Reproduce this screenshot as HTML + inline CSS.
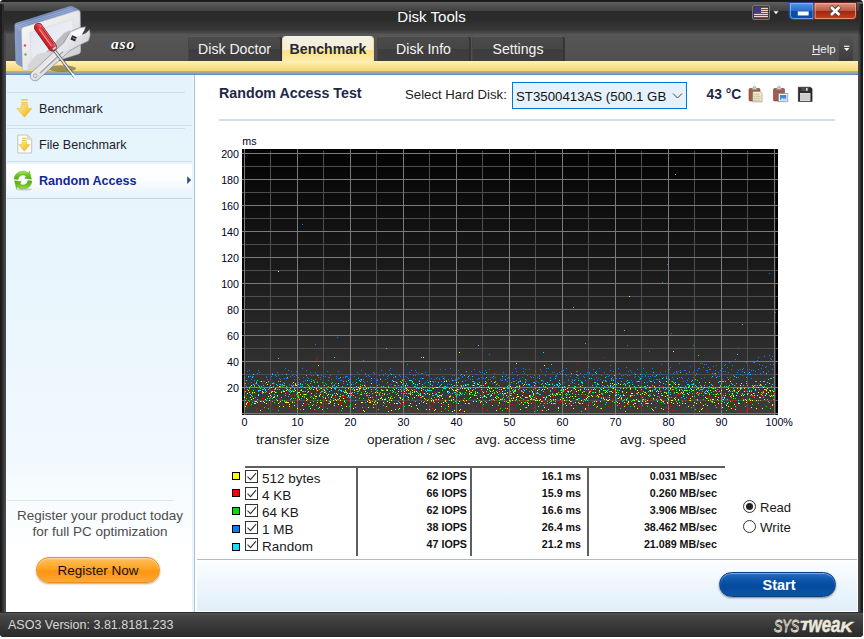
<!DOCTYPE html>
<html lang="en">
<head>
<meta charset="utf-8">
<title>Disk Tools</title>
<style>
html,body{margin:0;padding:0;background:#fff;}
body{width:864px;height:639px;position:relative;overflow:hidden;font-family:"Liberation Sans",sans-serif;color:#1a1a1a;}
.abs,.win div{position:absolute;box-sizing:border-box;}
.win{position:absolute;left:0;top:0;width:863px;height:637px;background:#2a2a2a;border-radius:4px 4px 4px 4px;overflow:hidden;}
.titlebar{left:0;top:0;width:863px;height:34px;background:linear-gradient(#181818 0,#202020 2px,#5e5e5e 2.3px,#505050 6px,#404040 11px,#2a2a2a 11.3px,#2c2c2c 20px,#383838 30px,#464646 32.5px,#525252 34px);}
.title{left:0;top:7px;width:863px;text-align:center;color:#fff;font-size:15.1px;line-height:20px;white-space:nowrap;}
.tabbar{left:6px;top:34px;width:852px;height:27px;background:linear-gradient(#565656,#4f4f4f);}
.frameL{left:0;top:34px;width:6px;height:603px;background:linear-gradient(90deg,#1a1a1a 0,#1e1e1e 1.5px,#303030 2px,#343434 3.5px,#444 4px,#4a4a4a 6px);}
.frameR{left:858px;top:34px;width:5px;height:603px;background:linear-gradient(90deg,#4a4a4a 0,#444 1.5px,#343434 2px,#303030 3px,#1e1e1e 3.5px,#1a1a1a 5px);}
.tab{top:36px;height:25px;border-radius:4px 4px 0 0;background:linear-gradient(#4b4b4b,#464646 48%,#3d3d3d 52%,#3f3f3f);border-top:1px solid #5c5c5c;border-left:1px solid #454545;border-right:2px solid #353535;color:#f4f4f4;font-size:14.1px;line-height:25px;text-align:center;white-space:nowrap;}
.tab.act{background:linear-gradient(#f3f1e4 0,#f5eed2 50%,#fbe18a 54%,#fdedb0 100%);border:1px solid #f3dc8c;border-bottom:none;border-top-color:#f4f2ea;color:#26263a;font-weight:bold;height:26px;line-height:24px;}
.yband{left:6px;top:61px;width:852px;height:10px;background:linear-gradient(#fdf1b8,#fbe590 50%,#f6d66c);}
.gband{left:6px;top:71px;width:852px;height:3px;background:linear-gradient(#b0b0b0,#989898);}
.bline{left:6px;top:74px;width:852px;height:1px;background:#5f8fc4;}
.side{left:6px;top:75px;width:188px;height:537px;background:linear-gradient(#e5f3fc 0,#e8f5fc 200px,#f1f9fe 380px,#fff 480px);}
.sideborder{left:192px;top:75px;width:3px;height:537px;background:linear-gradient(90deg,#e9f4fc 0,#e9f4fc 2px,#a9c1d9 2px,#a9c1d9 3px);}
.main{left:195px;top:75px;width:663px;height:537px;background:#fff;}
.sline{left:7px;height:1px;background:#cfdfee;}
.item{left:7px;width:185px;height:34px;font-size:12.6px;line-height:34px;color:#1c1c28;white-space:nowrap;}
.item span{position:absolute;left:32px;top:0;}
.item.sel{background:linear-gradient(#ffffff,#fbfdff 50%,#e6f2fb);color:#10289a;font-weight:bold;}
.status{left:0;top:612px;width:863px;height:25px;background:linear-gradient(#1c1c1c 0,#505050 1.5px,#464646 4px,#383838 14px,#2a2a2a 25px);}
.ver{left:8px;top:617.7px;color:#d8d8d8;font-size:12.5px;line-height:15px;white-space:nowrap;}
svg{position:absolute;left:0;top:0;overflow:visible;}
.lbl{font-size:13.5px;color:#1a1a1a;white-space:nowrap;line-height:16px;}
.val{font-size:10.7px;font-weight:bold;color:#111;white-space:nowrap;text-align:right;line-height:14px;}
.cb{left:245px;width:13px;height:13px;border:1px solid #333;background:#fff;}
.sq{left:232px;width:8px;height:8px;border:1px solid #000;}
</style>
</head>
<body>
<div class="win">
  <div class="titlebar"></div>
  <div class="title">Disk Tools</div>
  <div class="frameL"></div><div class="frameR"></div>
  <div class="abs" style="left:0;top:4px;width:4px;height:30px;background:linear-gradient(90deg,#1a1a1a 0,#1c1c1c 1.5px,#2c2c2c 2px,#2c2c2c 4px);"></div>
  <div class="abs" style="left:859px;top:4px;width:4px;height:30px;background:linear-gradient(90deg,#2c2c2c 0,#2c2c2c 2px,#1c1c1c 2.5px,#1a1a1a 4px);"></div>
  <div class="tabbar"></div>
  <div class="tab" style="left:188px;width:94px;">Disk Doctor</div>
  <div class="tab act" style="left:282px;width:92px;">Benchmark</div>
  <div class="tab" style="left:377px;width:94px;">Disk Info</div>
  <div class="tab" style="left:472px;width:93px;">Settings</div>
  <div class="yband"></div><div class="gband"></div><div class="bline"></div>
  <div class="abs" style="left:111px;top:35px;color:#fff;font-family:'Liberation Serif',serif;font-style:italic;font-weight:bold;font-size:15.500px;line-height:18px;letter-spacing:0.8px;text-shadow:1px 1px 2px #000;">aso</div>
  <div class="abs" style="left:812px;top:41px;color:#f0f0f0;font-size:11.5px;line-height:16px;"><u>H</u>elp</div>
  <div class="abs" style="left:839px;top:35px;width:14px;height:26px;background:linear-gradient(#555,#3c3c3c);border-radius:3px 3px 0 0;"></div>

  <!-- window buttons -->
  <div class="abs" style="left:752px;top:5px;width:18px;height:15px;border:1px solid #777;border-radius:2px;background:#3a3a3a;"></div>
  <svg width="864" height="639" viewBox="0 0 864 639">
    <defs>
      <linearGradient id="minG" x1="0" y1="0" x2="0" y2="1"><stop offset="0" stop-color="#5a9ae8"/><stop offset="0.48" stop-color="#2a6ccc"/><stop offset="0.5" stop-color="#0a48a4"/><stop offset="1" stop-color="#0c50ac"/></linearGradient>
      <linearGradient id="clsG" x1="0" y1="0" x2="0" y2="1"><stop offset="0" stop-color="#dc9c8c"/><stop offset="0.48" stop-color="#bc5640"/><stop offset="0.5" stop-color="#a42410"/><stop offset="1" stop-color="#c44420"/></linearGradient>
    </defs>
    <!-- flag -->
    <rect x="754" y="7" width="14" height="11" fill="#fff"/>
    <g fill="#d8202c"><rect x="754" y="7" width="14" height="1.2"/><rect x="754" y="9" width="14" height="1.2"/><rect x="754" y="11" width="14" height="1.2"/><rect x="754" y="13" width="14" height="1.2"/><rect x="754" y="15" width="14" height="1.2"/><rect x="754" y="17" width="14" height="1"/></g>
    <rect x="754" y="7" width="7" height="6" fill="#3c3c8c"/>
    <path d="M773.5 11.3h5l-2.5 3z" fill="#fff"/>
    <!-- minimize -->
    <path d="M789 2.5h25v17h-21a4 4 0 0 1 -4 -4z" fill="url(#minG)" stroke="#1c4c9c" stroke-width="1"/>
    <path d="M790.5 3.5h22.5v15h-19.5a3 3 0 0 1 -3 -3z" fill="none" stroke="#8cb8f4" stroke-width="1" opacity=".8"/>
    <rect x="798" y="11.7" width="10.5" height="3.5" fill="#fff" stroke="#d0d8e8" stroke-width=".5"/>
    <!-- close -->
    <path d="M814 2.5h42.5v13a4 4 0 0 1 -4 4h-38.5z" fill="url(#clsG)" stroke="#6c2414" stroke-width="1"/>
    <path d="M815.2 3.5h40.3v12a3 3 0 0 1 -3 3h-37.3z" fill="none" stroke="#f0b8a8" stroke-width="1" opacity=".7"/>
    <path d="M830.5 6.5l9 8.5M839.5 6.5l-9 8.5" stroke="#4a4a4a" stroke-width="4.2" fill="none"/>
    <path d="M831 7l8.500 8M839.500 7l-8.500 8" stroke="#5c3c34" stroke-width="4" fill="none"/><path d="M831 7l8.500 8M839.500 7l-8.500 8" stroke="#fff" stroke-width="2.600" fill="none"/>
    <!-- help dropdown -->
    <rect x="844" y="45.700" width="5.400" height="1.100" fill="#fff"/>
    <path d="M844 48h5.400l-2.700 3z" fill="#fff"/>
  </svg>
  <div class="side"></div>
  <div class="sideborder"></div>
  <div class="main"></div>


  <!-- sidebar items -->
  <div class="sline" style="top:92px;width:178px;"></div>
  <div class="item" style="top:92px;"><span>Benchmark</span></div>
  <div class="sline" style="top:125px;width:185px;"></div>
  <div class="sline" style="top:128px;width:178px;"></div>
  <div class="item" style="top:128px;"><span>File Benchmark</span></div>
  <div class="sline" style="top:161px;width:185px;"></div>
  <div class="item sel" style="top:164px;"><span>Random Access</span></div>
  <div class="sline" style="top:198px;width:185px;background:#c5d8ea;"></div>
  <div class="sline" style="top:500px;width:166px;background:#dbe7f2;"></div>
  <div class="abs" style="left:6px;top:508px;width:188px;text-align:center;font-size:13.5px;line-height:16.300px;color:#4c4c4c;white-space:nowrap;">Register your product today<br>for full PC optimization</div>
  <div class="abs" style="left:36px;top:557px;width:124px;height:26px;border-radius:13px;border:1px solid #e8901c;background:linear-gradient(#ffc060,#ffa01c 50%,#ff9410 55%,#ffa838);box-shadow:0 1px 2px rgba(120,80,0,.5),inset 0 1px 1px #ffe0a0;text-align:center;font-size:13.5px;line-height:25.500px;color:#111;">Register Now</div>

  <!-- header -->
  <div class="abs" style="left:219px;top:84px;font-size:14.250px;font-weight:bold;color:#1e2846;line-height:18px;white-space:nowrap;">Random Access Test</div>
  <div class="abs" style="left:405px;top:86.500px;font-size:13.2px;color:#222;line-height:16px;white-space:nowrap;">Select Hard Disk:</div>
  <div class="abs" style="left:512px;top:82px;width:175px;height:27px;border:1px solid #0078d7;background:#e5f1fb;font-size:13.25px;line-height:27px;padding-left:3px;white-space:nowrap;overflow:hidden;color:#111;">ST3500413AS (500.1 GB</div>
  <div class="abs" style="left:706.500px;top:86.500px;font-size:13.8px;font-weight:bold;color:#1e2846;line-height:16px;white-space:nowrap;">43 °C</div>
  <div class="abs" style="left:219px;top:119px;width:616px;height:2px;background:#d3deeb;"></div>

  <!-- icons -->
  <svg width="864" height="639" viewBox="0 0 864 639">
    <defs>
      <linearGradient id="yel" x1="0" y1="0" x2="1" y2="1"><stop offset="0" stop-color="#fff0a0"/><stop offset="0.5" stop-color="#f8d048"/><stop offset="1" stop-color="#e8b020"/></linearGradient>
      <linearGradient id="grn" x1="0" y1="0" x2="0" y2="1"><stop offset="0" stop-color="#b4e868"/><stop offset="0.5" stop-color="#6cc41c"/><stop offset="1" stop-color="#58a810"/></linearGradient>
      <linearGradient id="grn2" x1="0" y1="1" x2="0" y2="0"><stop offset="0" stop-color="#a8e058"/><stop offset="0.5" stop-color="#68c018"/><stop offset="1" stop-color="#58a810"/></linearGradient>
    </defs>
    <!-- benchmark arrow -->
    <g id="arrY">
      <rect x="21.3" y="99" width="6.4" height="1.6" fill="#f2c84a"/>
      <rect x="21.3" y="101.9" width="6.4" height="1.7" fill="#f2c84a"/>
      <path d="M21.3 104.6h6.4v3.8h4.2l-7.4 8.8l-7.6 -8.8h4.4z" fill="url(#yel)" stroke="#e4b838" stroke-width=".6"/>
    </g>
    <!-- file benchmark -->
    <path d="M17.8 135h9.6l4.3 4.3v13.7h-13.9z" fill="#fdfdfd" stroke="#c4c4c4" stroke-width="1"/>
    <path d="M27.4 135v4.3h4.3z" fill="#e4e4e4" stroke="#c4c4c4" stroke-width=".6"/>
    <rect x="22" y="137.6" width="4.6" height="1.2" fill="#f2c84a"/>
    <rect x="22" y="139.8" width="4.6" height="1.2" fill="#f2c84a"/>
    <path d="M22 141.9h4.6v2.6h3.2l-5.5 6.7l-5.6 -6.7h3.3z" fill="url(#yel)" stroke="#e4b838" stroke-width=".5"/>
    <!-- random access: green arrows -->
    <ellipse cx="24" cy="189.3" rx="8" ry="1.3" fill="#9aa4b0" opacity=".5"/>
    <path d="M14.05 179.06A9.0 9.0 0 0 1 28.79 173.11L29.47 171.10L31.47 179.26L24.73 178.33L26.21 176.17A5.0 5.0 0 0 0 18.03 179.48Z" fill="url(#grn)" stroke="#4c9a10" stroke-width=".4"/>
    <path d="M31.95 180.94A9.0 9.0 0 0 1 17.21 186.89L16.53 188.90L14.53 180.74L21.27 181.67L19.79 183.83A5.0 5.0 0 0 0 27.97 180.52Z" fill="url(#grn2)" stroke="#4c9a10" stroke-width=".4"/>
    <!-- small arrow -->
    <path d="M187.200 176.200l3.900 3.900l-3.900 3.900z" fill="#2c4a8c"/>
    <!-- select chevron -->
    <path d="M673 93.500l4.500 4.500l4.500 -4.500" fill="none" stroke="#444" stroke-width="1"/>
    <!-- clipboard 1 -->
    <g>
      <rect x="749" y="88.5" width="11" height="12.5" rx="1" fill="#a05c4c" stroke="#7c4034" stroke-width=".6"/>
      <path d="M752 89.5l1.2 -2.4h2.6l1.2 2.4z" fill="#d8d8d8" stroke="#8c8c8c" stroke-width=".5"/>
      <circle cx="754.5" cy="86.9" r="1" fill="#e8e8e8" stroke="#8c8c8c" stroke-width=".4"/>
      <path d="M752.8 91.5h7.2l2 2v8.4h-9.2z" fill="#f4efd8" stroke="#8c8468" stroke-width=".6"/>
      <path d="M754 94.2h5.5M754 96.2h6.5M754 98.2h6.5M754 100.2h6.5" stroke="#b0a884" stroke-width=".7"/>
    </g>
    <!-- clipboard 2 -->
    <g>
      <rect x="773.5" y="88.5" width="11" height="12.5" rx="1" fill="#a05c4c" stroke="#7c4034" stroke-width=".6"/>
      <path d="M776.5 89.5l1.2 -2.4h2.6l1.2 2.4z" fill="#d8d8d8" stroke="#8c8c8c" stroke-width=".5"/>
      <circle cx="779" cy="86.9" r="1" fill="#e8e8e8" stroke="#8c8c8c" stroke-width=".4"/>
      <rect x="778.5" y="93.5" width="9.3" height="8.3" fill="#f4f4f4" stroke="#8c8c8c" stroke-width=".7"/>
      <rect x="780" y="95" width="6.3" height="5.3" fill="#3c8cd8"/>
      <path d="M780 100.3l2.2 -2.6l1.6 1.4l1.2 -1l1.3 2.2z" fill="#c8e4f8"/>
    </g>
    <!-- floppy -->
    <g>
      <path d="M798.3 87.2h12.2l1.6 1.6v12.7h-13.8z" fill="#2c2c2c" stroke="#141414" stroke-width=".5"/>
      <rect x="801" y="87.6" width="7.6" height="3.6" fill="#4c4c4c"/>
      <rect x="806" y="88" width="1.6" height="2.8" fill="#d8d8d8"/>
      <rect x="800" y="93" width="10.4" height="8" fill="#dcdcdc"/>
      <path d="M800 95h10.4M800 97h10.4M800 99h10.4" stroke="#a8a8a8" stroke-width=".6"/>
    </g>
  </svg>


  <!-- logo -->
  <svg width="864" height="639" viewBox="0 0 864 639">
    <defs>
      <linearGradient id="hdF" x1="0" y1="0" x2="1" y2="1"><stop offset="0" stop-color="#fafafa"/><stop offset="0.6" stop-color="#e4e4e6"/><stop offset="1" stop-color="#c4c4c8"/></linearGradient>
      <linearGradient id="hdS" x1="0" y1="0" x2="1" y2="0"><stop offset="0" stop-color="#8ca0c8"/><stop offset=".25" stop-color="#7088b8"/><stop offset="1" stop-color="#8098c4"/></linearGradient>
      <linearGradient id="hdI" x1="0" y1="0" x2="1" y2="1"><stop offset="0" stop-color="#dfe3ee"/><stop offset="1" stop-color="#f4f5f8"/></linearGradient>
      <linearGradient id="redH" x1="0" y1="1" x2="1" y2="0"><stop offset="0" stop-color="#8c0c10"/><stop offset="0.45" stop-color="#d8242c"/><stop offset="0.7" stop-color="#f0787c"/><stop offset="1" stop-color="#b81018"/></linearGradient>
      <linearGradient id="slv" x1="0" y1="0" x2="1" y2="1"><stop offset="0" stop-color="#ffffff"/><stop offset="0.5" stop-color="#e4e4e8"/><stop offset="1" stop-color="#a8a8ac"/></linearGradient>
    </defs>
    <ellipse cx="62" cy="68.5" rx="14" ry="3.2" fill="#000" opacity=".35"/>
    <!-- hdd side (striped blue) -->
    <path d="M14.5 25.5q0 -2 2 -2.8l53 -16.5q2 -.5 3.500 .3l6.500 3.500q1 .8 1 2v38.500q0 2 -2 2.700l-50.500 16q-2 .5 -3.500 -.5l-7.500 -4.500q-1.500 -1 -1.500 -3z" fill="url(#hdS)"/>
    <path d="M15.500 26l56 -17.500M16.500 27.500l56.500 -17.500M18 29l57 -17.800M19.500 30.300l57 -17.800" stroke="#c4d0e8" stroke-width=".6" fill="none" opacity=".7"/>
    <!-- hdd front -->
    <path d="M21.500 30q0 -2 2 -2.700l53 -16.500q3 -.8 3.500 2l.5 38.500q0 2 -2 2.700l-52 16.500q-3.500 1 -4 -2z" fill="url(#hdF)" stroke="#b4b8c4" stroke-width=".5"/>
    <path d="M30 32.500l43 -13.500v27l-42 14z" fill="url(#hdI)" stroke="#d0d4dc" stroke-width=".5"/>
    <circle cx="25" cy="45.500" r="1.200" fill="#e84c4c"/>
    <circle cx="25.500" cy="54.500" r="1.200" fill="#58c428"/>
    <!-- bracket/shadow areas -->
    <path d="M46 52l18 -19l6 -3l-2 10l-14 16z" fill="#a8a8ac" opacity=".7"/>
    <path d="M27 66l10 -12l40 -8l2 4l-50 19z" fill="#d4d4d8" opacity=".9"/>
    <!-- wrench -->
    <path d="M31.5 72.500L63.500 43L70.500 31.500L80 27.500L85.600 26.800L84.500 30.500L82.500 34L86 33L89.500 29.500Q91.500 35 88.500 41L79 45.500L70 50.500L38.800 79.200A4.700 4.700 0 1 1 31.500 72.500Z" fill="url(#slv)" stroke="#77777c" stroke-width=".6" stroke-linejoin="round"/>
    <path d="M71 33l9 -4l4.500 -.8l-1.500 3.500l-1.500 3l-8 4z" fill="#fff" opacity=".8"/>
    <path d="M40.500 72.500L62.500 52" stroke="#a4a4a8" stroke-width="1.600" fill="none" stroke-linecap="round"/>
    <path d="M39.500 71.500L61.500 51" stroke="#fff" stroke-width=".8" fill="none" stroke-linecap="round"/>
    <circle cx="35.200" cy="75.800" r="1.800" fill="#dfe7f0" stroke="#77777c" stroke-width=".5"/>
    <path d="M72.200 35.300l4.600 2l-1.700 4.300l-4.600 -2z" fill="#26262a"/>
    <path d="M72.400 37.700l3.800 1.600" stroke="#d0d0d4" stroke-width=".7"/>
    <path d="M84.800 30.200l-2.600 4.200l1.600 -.4l2.600 -3.600z" fill="#3c3c40"/>
    <!-- screwdriver shaft -->
    <path d="M54.500 50.500l19.500 25.500" stroke="#5c5c60" stroke-width="3" stroke-linecap="round"/>
    <path d="M54.500 50.500l19.500 25.500" stroke="#e4e4e8" stroke-width="1.600" stroke-linecap="round"/>
    <path d="M73 74.500l2.500 3" stroke="#fafafa" stroke-width="2.200" stroke-linecap="round"/>
    <!-- screwdriver handle -->
    <path d="M38.500 27.500l14 19.500" stroke="#7c0c10" stroke-width="9" stroke-linecap="round"/>
    <path d="M38.500 27.500l14 19.500" stroke="url(#redH)" stroke-width="7.800" stroke-linecap="round"/>
    <path d="M39.500 29.500l11.500 16" stroke="#f8a0a4" stroke-width="1.200" stroke-linecap="round" opacity=".9"/>
    <path d="M41.800 27.800l11.500 16" stroke="#8c0c14" stroke-width="1" stroke-linecap="round" opacity=".8"/>
    <path d="M52 48.500l3.500 -2.500l1.500 2l-3.500 2.500z" fill="#c8ccd0" stroke="#505054" stroke-width=".5"/>
  </svg>
  <!-- chart -->
  <svg width="864" height="639" viewBox="0 0 864 639" shape-rendering="crispEdges">
    <defs>
      <linearGradient id="pg" x1="0" y1="0" x2="0" y2="1"><stop offset="0" stop-color="#030303"/><stop offset="0.45" stop-color="#1a1a1a"/><stop offset="1" stop-color="#3c3c3c"/></linearGradient>
    </defs>
    <rect x="242" y="149" width="536" height="266" fill="url(#pg)"/>
    <rect x="242" y="149" width="2" height="266" fill="#000"/>
    <rect x="776" y="149" width="2" height="266" fill="#000"/>
    <g id="grid" fill="#7a7a7a"><rect x="747" y="151" width="1" height="264" fill="#4e4e4e"/><rect x="694" y="151" width="1" height="264" fill="#4e4e4e"/><rect x="641" y="151" width="1" height="264" fill="#4e4e4e"/><rect x="588" y="151" width="1" height="264" fill="#4e4e4e"/><rect x="535" y="151" width="1" height="264" fill="#4e4e4e"/><rect x="482" y="151" width="1" height="264" fill="#4e4e4e"/><rect x="429" y="151" width="1" height="264" fill="#4e4e4e"/><rect x="376" y="151" width="1" height="264" fill="#4e4e4e"/><rect x="323" y="151" width="1" height="264" fill="#4e4e4e"/><rect x="270" y="151" width="1" height="264" fill="#4e4e4e"/><rect x="242" y="413" width="536" height="1"/><rect x="242" y="400" width="536" height="1" fill="#4e4e4e"/><rect x="242" y="387" width="536" height="1"/><rect x="242" y="374" width="536" height="1" fill="#4e4e4e"/><rect x="242" y="361" width="536" height="1"/><rect x="242" y="348" width="536" height="1" fill="#4e4e4e"/><rect x="242" y="335" width="536" height="1"/><rect x="242" y="322" width="536" height="1" fill="#4e4e4e"/><rect x="242" y="309" width="536" height="1"/><rect x="242" y="296" width="536" height="1" fill="#4e4e4e"/><rect x="242" y="283" width="536" height="1"/><rect x="242" y="270" width="536" height="1" fill="#4e4e4e"/><rect x="242" y="257" width="536" height="1"/><rect x="242" y="244" width="536" height="1" fill="#4e4e4e"/><rect x="242" y="231" width="536" height="1"/><rect x="242" y="218" width="536" height="1" fill="#4e4e4e"/><rect x="242" y="205" width="536" height="1"/><rect x="242" y="192" width="536" height="1" fill="#4e4e4e"/><rect x="242" y="179" width="536" height="1"/><rect x="242" y="166" width="536" height="1" fill="#4e4e4e"/><rect x="242" y="153" width="536" height="1"/><rect x="244" y="149" width="1" height="266"/><rect x="297" y="149" width="1" height="266"/><rect x="350" y="149" width="1" height="266"/><rect x="403" y="149" width="1" height="266"/><rect x="456" y="149" width="1" height="266"/><rect x="509" y="149" width="1" height="266"/><rect x="562" y="149" width="1" height="266"/><rect x="615" y="149" width="1" height="266"/><rect x="668" y="149" width="1" height="266"/><rect x="721" y="149" width="1" height="266"/><rect x="774" y="149" width="1" height="266"/></g>
    <g id="dots"><path fill="#ff0000" d="M244 390h1v1h-1zM245 396h1v1h-1zM246 395h1v1h-1zM247 400h1v1h-1zM247 407h1v1h-1zM248 383h1v1h-1zM249 402h1v1h-1zM249 404h1v1h-1zM250 405h1v1h-1zM251 391h1v1h-1zM252 397h1v1h-1zM253 401h1v1h-1zM254 384h1v1h-1zM254 401h1v1h-1zM255 393h1v1h-1zM256 409h1v1h-1zM257 411h1v1h-1zM257 408h1v1h-1zM258 404h1v1h-1zM259 401h1v1h-1zM259 389h1v1h-1zM260 401h1v1h-1zM261 392h1v1h-1zM262 398h1v1h-1zM262 403h1v1h-1zM263 398h1v1h-1zM264 389h1v1h-1zM265 391h1v1h-1zM265 391h1v1h-1zM266 389h1v1h-1zM267 392h1v1h-1zM268 404h1v1h-1zM268 401h1v1h-1zM269 398h1v1h-1zM270 396h1v1h-1zM271 403h1v1h-1zM272 409h1v1h-1zM272 390h1v1h-1zM273 384h1v1h-1zM274 403h1v1h-1zM274 387h1v1h-1zM276 392h1v1h-1zM276 402h1v1h-1zM277 401h1v1h-1zM278 407h1v1h-1zM278 410h1v1h-1zM279 398h1v1h-1zM280 399h1v1h-1zM281 399h1v1h-1zM282 385h1v1h-1zM282 403h1v1h-1zM283 390h1v1h-1zM284 389h1v1h-1zM285 393h1v1h-1zM285 388h1v1h-1zM286 390h1v1h-1zM287 392h1v1h-1zM288 394h1v1h-1zM289 408h1v1h-1zM289 408h1v1h-1zM290 396h1v1h-1zM291 395h1v1h-1zM292 407h1v1h-1zM292 396h1v1h-1zM293 410h1v1h-1zM294 395h1v1h-1zM294 394h1v1h-1zM295 390h1v1h-1zM296 400h1v1h-1zM297 402h1v1h-1zM298 398h1v1h-1zM298 394h1v1h-1zM299 392h1v1h-1zM300 409h1v1h-1zM300 403h1v1h-1zM301 406h1v1h-1zM302 387h1v1h-1zM302 401h1v1h-1zM303 395h1v1h-1zM304 391h1v1h-1zM305 404h1v1h-1zM305 411h1v1h-1zM307 400h1v1h-1zM307 403h1v1h-1zM308 392h1v1h-1zM309 404h1v1h-1zM310 395h1v1h-1zM310 405h1v1h-1zM311 397h1v1h-1zM312 397h1v1h-1zM313 401h1v1h-1zM313 397h1v1h-1zM314 399h1v1h-1zM315 410h1v1h-1zM316 403h1v1h-1zM316 390h1v1h-1zM317 391h1v1h-1zM318 386h1v1h-1zM319 393h1v1h-1zM320 393h1v1h-1zM320 405h1v1h-1zM321 392h1v1h-1zM321 406h1v1h-1zM322 398h1v1h-1zM323 397h1v1h-1zM324 411h1v1h-1zM325 400h1v1h-1zM326 403h1v1h-1zM326 391h1v1h-1zM327 386h1v1h-1zM328 401h1v1h-1zM328 393h1v1h-1zM329 391h1v1h-1zM330 399h1v1h-1zM331 410h1v1h-1zM332 386h1v1h-1zM332 396h1v1h-1zM333 405h1v1h-1zM334 399h1v1h-1zM335 397h1v1h-1zM335 396h1v1h-1zM336 383h1v1h-1zM337 403h1v1h-1zM337 406h1v1h-1zM338 402h1v1h-1zM339 410h1v1h-1zM340 402h1v1h-1zM340 400h1v1h-1zM341 403h1v1h-1zM342 397h1v1h-1zM343 396h1v1h-1zM344 398h1v1h-1zM344 402h1v1h-1zM345 396h1v1h-1zM346 391h1v1h-1zM346 392h1v1h-1zM348 400h1v1h-1zM348 389h1v1h-1zM349 401h1v1h-1zM350 403h1v1h-1zM351 392h1v1h-1zM351 394h1v1h-1zM352 394h1v1h-1zM353 388h1v1h-1zM353 397h1v1h-1zM354 404h1v1h-1zM355 396h1v1h-1zM356 403h1v1h-1zM356 391h1v1h-1zM358 410h1v1h-1zM358 386h1v1h-1zM359 397h1v1h-1zM359 395h1v1h-1zM360 391h1v1h-1zM361 393h1v1h-1zM362 402h1v1h-1zM363 391h1v1h-1zM363 391h1v1h-1zM364 395h1v1h-1zM365 384h1v1h-1zM365 407h1v1h-1zM366 409h1v1h-1zM367 407h1v1h-1zM368 398h1v1h-1zM369 399h1v1h-1zM369 399h1v1h-1zM370 401h1v1h-1zM371 400h1v1h-1zM372 396h1v1h-1zM372 385h1v1h-1zM373 389h1v1h-1zM373 393h1v1h-1zM374 404h1v1h-1zM375 403h1v1h-1zM376 408h1v1h-1zM377 385h1v1h-1zM378 392h1v1h-1zM378 393h1v1h-1zM379 388h1v1h-1zM380 397h1v1h-1zM381 390h1v1h-1zM381 395h1v1h-1zM382 394h1v1h-1zM383 393h1v1h-1zM384 401h1v1h-1zM384 393h1v1h-1zM385 407h1v1h-1zM386 383h1v1h-1zM386 408h1v1h-1zM387 387h1v1h-1zM388 385h1v1h-1zM389 384h1v1h-1zM390 395h1v1h-1zM390 404h1v1h-1zM391 398h1v1h-1zM392 401h1v1h-1zM393 392h1v1h-1zM394 383h1v1h-1zM394 403h1v1h-1zM395 407h1v1h-1zM396 394h1v1h-1zM397 395h1v1h-1zM398 401h1v1h-1zM398 406h1v1h-1zM398 401h1v1h-1zM400 403h1v1h-1zM400 404h1v1h-1zM401 395h1v1h-1zM402 402h1v1h-1zM403 391h1v1h-1zM403 392h1v1h-1zM404 402h1v1h-1zM405 392h1v1h-1zM406 389h1v1h-1zM406 393h1v1h-1zM407 399h1v1h-1zM408 410h1v1h-1zM408 397h1v1h-1zM410 392h1v1h-1zM410 394h1v1h-1zM411 393h1v1h-1zM412 403h1v1h-1zM412 399h1v1h-1zM413 396h1v1h-1zM414 383h1v1h-1zM415 409h1v1h-1zM415 390h1v1h-1zM417 399h1v1h-1zM417 399h1v1h-1zM418 396h1v1h-1zM419 391h1v1h-1zM419 393h1v1h-1zM420 405h1v1h-1zM421 396h1v1h-1zM422 392h1v1h-1zM422 392h1v1h-1zM423 393h1v1h-1zM424 395h1v1h-1zM424 395h1v1h-1zM425 393h1v1h-1zM426 399h1v1h-1zM427 385h1v1h-1zM428 393h1v1h-1zM429 408h1v1h-1zM429 391h1v1h-1zM430 406h1v1h-1zM431 397h1v1h-1zM432 408h1v1h-1zM432 393h1v1h-1zM433 402h1v1h-1zM433 400h1v1h-1zM435 400h1v1h-1zM435 392h1v1h-1zM436 398h1v1h-1zM437 411h1v1h-1zM437 402h1v1h-1zM438 395h1v1h-1zM439 400h1v1h-1zM439 400h1v1h-1zM441 408h1v1h-1zM441 406h1v1h-1zM442 389h1v1h-1zM443 404h1v1h-1zM444 409h1v1h-1zM444 401h1v1h-1zM445 401h1v1h-1zM445 399h1v1h-1zM447 395h1v1h-1zM447 400h1v1h-1zM448 408h1v1h-1zM449 387h1v1h-1zM450 393h1v1h-1zM450 406h1v1h-1zM451 401h1v1h-1zM452 397h1v1h-1zM453 385h1v1h-1zM454 392h1v1h-1zM454 410h1v1h-1zM455 396h1v1h-1zM456 392h1v1h-1zM456 404h1v1h-1zM457 393h1v1h-1zM458 403h1v1h-1zM459 389h1v1h-1zM460 405h1v1h-1zM460 401h1v1h-1zM461 405h1v1h-1zM462 410h1v1h-1zM463 399h1v1h-1zM463 400h1v1h-1zM464 401h1v1h-1zM464 400h1v1h-1zM466 393h1v1h-1zM466 410h1v1h-1zM467 394h1v1h-1zM468 399h1v1h-1zM469 404h1v1h-1zM469 403h1v1h-1zM470 390h1v1h-1zM471 395h1v1h-1zM472 409h1v1h-1zM472 405h1v1h-1zM473 389h1v1h-1zM474 395h1v1h-1zM474 399h1v1h-1zM475 399h1v1h-1zM476 406h1v1h-1zM477 393h1v1h-1zM478 399h1v1h-1zM478 393h1v1h-1zM479 393h1v1h-1zM480 390h1v1h-1zM481 404h1v1h-1zM481 394h1v1h-1zM482 409h1v1h-1zM483 389h1v1h-1zM483 408h1v1h-1zM484 401h1v1h-1zM485 384h1v1h-1zM486 392h1v1h-1zM487 409h1v1h-1zM487 410h1v1h-1zM488 405h1v1h-1zM489 383h1v1h-1zM490 394h1v1h-1zM491 395h1v1h-1zM491 402h1v1h-1zM492 399h1v1h-1zM493 397h1v1h-1zM493 400h1v1h-1zM494 394h1v1h-1zM495 385h1v1h-1zM496 395h1v1h-1zM497 393h1v1h-1zM497 384h1v1h-1zM498 398h1v1h-1zM499 408h1v1h-1zM500 390h1v1h-1zM500 393h1v1h-1zM501 395h1v1h-1zM502 395h1v1h-1zM502 398h1v1h-1zM503 404h1v1h-1zM504 401h1v1h-1zM505 401h1v1h-1zM505 405h1v1h-1zM506 408h1v1h-1zM507 393h1v1h-1zM508 410h1v1h-1zM509 396h1v1h-1zM510 401h1v1h-1zM510 404h1v1h-1zM511 409h1v1h-1zM512 404h1v1h-1zM512 409h1v1h-1zM513 383h1v1h-1zM514 400h1v1h-1zM515 410h1v1h-1zM516 397h1v1h-1zM516 405h1v1h-1zM517 402h1v1h-1zM518 403h1v1h-1zM519 390h1v1h-1zM520 403h1v1h-1zM520 386h1v1h-1zM520 400h1v1h-1zM522 402h1v1h-1zM522 392h1v1h-1zM523 391h1v1h-1zM524 400h1v1h-1zM525 401h1v1h-1zM525 389h1v1h-1zM526 396h1v1h-1zM526 400h1v1h-1zM527 410h1v1h-1zM528 401h1v1h-1zM529 402h1v1h-1zM530 389h1v1h-1zM531 399h1v1h-1zM532 402h1v1h-1zM532 399h1v1h-1zM533 408h1v1h-1zM534 407h1v1h-1zM534 388h1v1h-1zM535 395h1v1h-1zM536 392h1v1h-1zM537 410h1v1h-1zM537 396h1v1h-1zM538 395h1v1h-1zM539 391h1v1h-1zM539 405h1v1h-1zM540 398h1v1h-1zM541 410h1v1h-1zM542 396h1v1h-1zM543 403h1v1h-1zM543 400h1v1h-1zM544 401h1v1h-1zM545 392h1v1h-1zM545 402h1v1h-1zM547 406h1v1h-1zM547 399h1v1h-1zM548 389h1v1h-1zM549 389h1v1h-1zM549 393h1v1h-1zM550 391h1v1h-1zM551 400h1v1h-1zM552 404h1v1h-1zM553 393h1v1h-1zM553 396h1v1h-1zM554 390h1v1h-1zM555 389h1v1h-1zM556 399h1v1h-1zM556 399h1v1h-1zM557 407h1v1h-1zM558 399h1v1h-1zM559 392h1v1h-1zM559 402h1v1h-1zM560 402h1v1h-1zM561 400h1v1h-1zM562 385h1v1h-1zM563 399h1v1h-1zM563 399h1v1h-1zM564 402h1v1h-1zM564 390h1v1h-1zM566 399h1v1h-1zM566 387h1v1h-1zM567 390h1v1h-1zM567 399h1v1h-1zM568 409h1v1h-1zM569 404h1v1h-1zM570 404h1v1h-1zM570 405h1v1h-1zM571 396h1v1h-1zM572 401h1v1h-1zM573 403h1v1h-1zM574 393h1v1h-1zM574 391h1v1h-1zM575 399h1v1h-1zM576 405h1v1h-1zM577 392h1v1h-1zM578 394h1v1h-1zM579 394h1v1h-1zM579 384h1v1h-1zM580 404h1v1h-1zM580 404h1v1h-1zM581 397h1v1h-1zM582 399h1v1h-1zM583 394h1v1h-1zM583 399h1v1h-1zM584 396h1v1h-1zM585 394h1v1h-1zM585 399h1v1h-1zM586 404h1v1h-1zM587 397h1v1h-1zM588 405h1v1h-1zM589 408h1v1h-1zM589 402h1v1h-1zM590 390h1v1h-1zM591 390h1v1h-1zM592 395h1v1h-1zM593 401h1v1h-1zM594 409h1v1h-1zM594 403h1v1h-1zM595 399h1v1h-1zM596 402h1v1h-1zM596 401h1v1h-1zM597 399h1v1h-1zM598 394h1v1h-1zM599 396h1v1h-1zM600 387h1v1h-1zM600 409h1v1h-1zM601 394h1v1h-1zM602 410h1v1h-1zM603 396h1v1h-1zM603 393h1v1h-1zM604 401h1v1h-1zM605 397h1v1h-1zM605 404h1v1h-1zM606 403h1v1h-1zM607 397h1v1h-1zM608 406h1v1h-1zM608 397h1v1h-1zM610 393h1v1h-1zM610 400h1v1h-1zM611 391h1v1h-1zM612 398h1v1h-1zM613 392h1v1h-1zM613 399h1v1h-1zM614 402h1v1h-1zM614 390h1v1h-1zM616 394h1v1h-1zM616 399h1v1h-1zM617 389h1v1h-1zM618 404h1v1h-1zM618 389h1v1h-1zM619 405h1v1h-1zM620 399h1v1h-1zM621 406h1v1h-1zM621 395h1v1h-1zM622 387h1v1h-1zM623 392h1v1h-1zM623 403h1v1h-1zM625 397h1v1h-1zM625 405h1v1h-1zM626 395h1v1h-1zM627 397h1v1h-1zM627 404h1v1h-1zM628 409h1v1h-1zM629 397h1v1h-1zM630 391h1v1h-1zM631 392h1v1h-1zM631 396h1v1h-1zM632 401h1v1h-1zM633 405h1v1h-1zM634 407h1v1h-1zM634 402h1v1h-1zM635 399h1v1h-1zM636 397h1v1h-1zM636 389h1v1h-1zM637 392h1v1h-1zM638 399h1v1h-1zM639 406h1v1h-1zM640 390h1v1h-1zM640 401h1v1h-1zM641 396h1v1h-1zM642 399h1v1h-1zM643 409h1v1h-1zM643 401h1v1h-1zM644 404h1v1h-1zM645 402h1v1h-1zM646 394h1v1h-1zM646 403h1v1h-1zM647 405h1v1h-1zM648 400h1v1h-1zM649 388h1v1h-1zM650 393h1v1h-1zM650 386h1v1h-1zM651 398h1v1h-1zM652 401h1v1h-1zM653 387h1v1h-1zM653 389h1v1h-1zM654 399h1v1h-1zM655 395h1v1h-1zM656 407h1v1h-1zM656 403h1v1h-1zM657 398h1v1h-1zM658 399h1v1h-1zM658 396h1v1h-1zM659 395h1v1h-1zM660 395h1v1h-1zM661 397h1v1h-1zM662 400h1v1h-1zM663 386h1v1h-1zM663 389h1v1h-1zM664 391h1v1h-1zM665 384h1v1h-1zM666 389h1v1h-1zM666 407h1v1h-1zM667 408h1v1h-1zM668 410h1v1h-1zM668 404h1v1h-1zM669 408h1v1h-1zM670 406h1v1h-1zM671 390h1v1h-1zM672 399h1v1h-1zM672 399h1v1h-1zM673 410h1v1h-1zM673 391h1v1h-1zM675 410h1v1h-1zM676 395h1v1h-1zM676 402h1v1h-1zM677 405h1v1h-1zM677 395h1v1h-1zM678 394h1v1h-1zM679 394h1v1h-1zM680 403h1v1h-1zM681 399h1v1h-1zM681 385h1v1h-1zM682 400h1v1h-1zM683 395h1v1h-1zM683 409h1v1h-1zM684 390h1v1h-1zM685 401h1v1h-1zM686 391h1v1h-1zM686 407h1v1h-1zM687 387h1v1h-1zM688 398h1v1h-1zM688 400h1v1h-1zM690 387h1v1h-1zM690 401h1v1h-1zM691 391h1v1h-1zM692 399h1v1h-1zM693 407h1v1h-1zM693 390h1v1h-1zM694 399h1v1h-1zM695 399h1v1h-1zM696 389h1v1h-1zM696 399h1v1h-1zM697 394h1v1h-1zM698 383h1v1h-1zM699 392h1v1h-1zM700 389h1v1h-1zM700 399h1v1h-1zM701 389h1v1h-1zM701 403h1v1h-1zM702 404h1v1h-1zM703 395h1v1h-1zM704 392h1v1h-1zM705 403h1v1h-1zM705 391h1v1h-1zM707 411h1v1h-1zM707 396h1v1h-1zM707 409h1v1h-1zM709 396h1v1h-1zM709 397h1v1h-1zM710 401h1v1h-1zM711 402h1v1h-1zM711 398h1v1h-1zM713 391h1v1h-1zM713 386h1v1h-1zM714 391h1v1h-1zM715 405h1v1h-1zM715 407h1v1h-1zM716 396h1v1h-1zM716 400h1v1h-1zM718 391h1v1h-1zM718 404h1v1h-1zM719 390h1v1h-1zM720 394h1v1h-1zM721 385h1v1h-1zM721 409h1v1h-1zM722 401h1v1h-1zM723 397h1v1h-1zM724 398h1v1h-1zM724 411h1v1h-1zM725 399h1v1h-1zM726 399h1v1h-1zM727 401h1v1h-1zM728 405h1v1h-1zM728 389h1v1h-1zM729 387h1v1h-1zM730 400h1v1h-1zM731 400h1v1h-1zM731 393h1v1h-1zM732 401h1v1h-1zM733 408h1v1h-1zM734 400h1v1h-1zM734 389h1v1h-1zM735 400h1v1h-1zM736 407h1v1h-1zM736 404h1v1h-1zM737 390h1v1h-1zM738 390h1v1h-1zM739 405h1v1h-1zM740 394h1v1h-1zM741 410h1v1h-1zM741 393h1v1h-1zM742 398h1v1h-1zM742 393h1v1h-1zM743 391h1v1h-1zM744 403h1v1h-1zM745 390h1v1h-1zM746 410h1v1h-1zM746 391h1v1h-1zM747 408h1v1h-1zM748 399h1v1h-1zM749 408h1v1h-1zM750 392h1v1h-1zM750 402h1v1h-1zM751 399h1v1h-1zM751 395h1v1h-1zM752 396h1v1h-1zM753 396h1v1h-1zM754 387h1v1h-1zM755 401h1v1h-1zM756 401h1v1h-1zM756 409h1v1h-1zM757 395h1v1h-1zM758 383h1v1h-1zM758 401h1v1h-1zM759 400h1v1h-1zM760 394h1v1h-1zM761 400h1v1h-1zM761 384h1v1h-1zM762 392h1v1h-1zM763 396h1v1h-1zM764 393h1v1h-1zM765 405h1v1h-1zM765 390h1v1h-1zM766 391h1v1h-1zM767 401h1v1h-1zM767 401h1v1h-1zM768 403h1v1h-1zM769 400h1v1h-1zM770 391h1v1h-1zM770 406h1v1h-1zM771 393h1v1h-1zM772 390h1v1h-1zM773 404h1v1h-1zM774 392h1v1h-1z"/>
<path fill="#00ff00" d="M244 396h1v1h-1zM245 383h1v1h-1zM246 398h1v1h-1zM247 387h1v1h-1zM247 387h1v1h-1zM248 400h1v1h-1zM249 388h1v1h-1zM249 401h1v1h-1zM250 386h1v1h-1zM251 404h1v1h-1zM252 393h1v1h-1zM252 396h1v1h-1zM253 390h1v1h-1zM254 401h1v1h-1zM254 386h1v1h-1zM255 397h1v1h-1zM256 387h1v1h-1zM257 380h1v1h-1zM258 385h1v1h-1zM258 391h1v1h-1zM259 387h1v1h-1zM259 386h1v1h-1zM260 388h1v1h-1zM261 401h1v1h-1zM262 393h1v1h-1zM262 389h1v1h-1zM263 389h1v1h-1zM264 407h1v1h-1zM264 402h1v1h-1zM265 392h1v1h-1zM266 391h1v1h-1zM267 387h1v1h-1zM267 398h1v1h-1zM268 408h1v1h-1zM269 398h1v1h-1zM269 388h1v1h-1zM270 397h1v1h-1zM271 391h1v1h-1zM272 401h1v1h-1zM272 398h1v1h-1zM273 383h1v1h-1zM274 402h1v1h-1zM274 389h1v1h-1zM275 389h1v1h-1zM276 392h1v1h-1zM277 389h1v1h-1zM277 396h1v1h-1zM278 410h1v1h-1zM279 402h1v1h-1zM280 387h1v1h-1zM280 386h1v1h-1zM281 391h1v1h-1zM282 386h1v1h-1zM282 400h1v1h-1zM283 385h1v1h-1zM284 401h1v1h-1zM284 400h1v1h-1zM285 393h1v1h-1zM286 386h1v1h-1zM286 401h1v1h-1zM287 387h1v1h-1zM288 396h1v1h-1zM289 389h1v1h-1zM290 392h1v1h-1zM290 399h1v1h-1zM291 385h1v1h-1zM292 401h1v1h-1zM292 390h1v1h-1zM293 398h1v1h-1zM294 391h1v1h-1zM294 402h1v1h-1zM295 398h1v1h-1zM296 394h1v1h-1zM297 396h1v1h-1zM298 395h1v1h-1zM298 396h1v1h-1zM299 387h1v1h-1zM300 409h1v1h-1zM300 384h1v1h-1zM301 398h1v1h-1zM302 386h1v1h-1zM302 391h1v1h-1zM303 394h1v1h-1zM304 396h1v1h-1zM304 397h1v1h-1zM305 394h1v1h-1zM306 394h1v1h-1zM307 384h1v1h-1zM307 389h1v1h-1zM308 404h1v1h-1zM309 406h1v1h-1zM309 386h1v1h-1zM310 397h1v1h-1zM311 396h1v1h-1zM311 388h1v1h-1zM313 380h1v1h-1zM313 404h1v1h-1zM314 409h1v1h-1zM315 398h1v1h-1zM316 393h1v1h-1zM316 405h1v1h-1zM317 382h1v1h-1zM317 400h1v1h-1zM318 408h1v1h-1zM319 389h1v1h-1zM320 400h1v1h-1zM320 388h1v1h-1zM321 403h1v1h-1zM322 382h1v1h-1zM322 396h1v1h-1zM323 389h1v1h-1zM324 389h1v1h-1zM325 397h1v1h-1zM325 391h1v1h-1zM326 384h1v1h-1zM327 408h1v1h-1zM328 386h1v1h-1zM328 397h1v1h-1zM329 401h1v1h-1zM330 394h1v1h-1zM330 399h1v1h-1zM331 396h1v1h-1zM331 396h1v1h-1zM332 382h1v1h-1zM333 398h1v1h-1zM334 385h1v1h-1zM335 389h1v1h-1zM335 387h1v1h-1zM336 393h1v1h-1zM337 399h1v1h-1zM338 399h1v1h-1zM338 390h1v1h-1zM339 389h1v1h-1zM340 394h1v1h-1zM340 394h1v1h-1zM341 410h1v1h-1zM341 391h1v1h-1zM342 395h1v1h-1zM343 395h1v1h-1zM344 392h1v1h-1zM344 400h1v1h-1zM345 402h1v1h-1zM346 394h1v1h-1zM346 381h1v1h-1zM347 397h1v1h-1zM349 397h1v1h-1zM349 406h1v1h-1zM350 387h1v1h-1zM350 404h1v1h-1zM351 395h1v1h-1zM352 392h1v1h-1zM352 389h1v1h-1zM353 388h1v1h-1zM354 387h1v1h-1zM355 407h1v1h-1zM355 397h1v1h-1zM356 382h1v1h-1zM357 391h1v1h-1zM357 393h1v1h-1zM359 390h1v1h-1zM359 389h1v1h-1zM359 398h1v1h-1zM360 384h1v1h-1zM361 392h1v1h-1zM362 407h1v1h-1zM363 389h1v1h-1zM363 398h1v1h-1zM364 393h1v1h-1zM365 389h1v1h-1zM365 386h1v1h-1zM366 393h1v1h-1zM367 392h1v1h-1zM368 397h1v1h-1zM368 399h1v1h-1zM369 393h1v1h-1zM370 386h1v1h-1zM370 401h1v1h-1zM371 391h1v1h-1zM372 397h1v1h-1zM372 401h1v1h-1zM373 399h1v1h-1zM374 402h1v1h-1zM375 400h1v1h-1zM375 404h1v1h-1zM376 391h1v1h-1zM377 403h1v1h-1zM377 390h1v1h-1zM378 409h1v1h-1zM379 395h1v1h-1zM380 392h1v1h-1zM381 398h1v1h-1zM381 386h1v1h-1zM382 395h1v1h-1zM383 405h1v1h-1zM383 390h1v1h-1zM384 403h1v1h-1zM385 398h1v1h-1zM386 390h1v1h-1zM386 406h1v1h-1zM387 401h1v1h-1zM387 382h1v1h-1zM389 400h1v1h-1zM389 399h1v1h-1zM390 390h1v1h-1zM390 397h1v1h-1zM391 396h1v1h-1zM392 398h1v1h-1zM392 392h1v1h-1zM393 388h1v1h-1zM394 397h1v1h-1zM395 392h1v1h-1zM396 394h1v1h-1zM396 394h1v1h-1zM397 393h1v1h-1zM398 409h1v1h-1zM398 401h1v1h-1zM399 397h1v1h-1zM400 403h1v1h-1zM401 390h1v1h-1zM401 393h1v1h-1zM402 380h1v1h-1zM403 398h1v1h-1zM404 393h1v1h-1zM404 406h1v1h-1zM405 386h1v1h-1zM405 395h1v1h-1zM406 393h1v1h-1zM407 389h1v1h-1zM408 399h1v1h-1zM408 405h1v1h-1zM409 393h1v1h-1zM410 392h1v1h-1zM410 391h1v1h-1zM411 389h1v1h-1zM412 382h1v1h-1zM412 398h1v1h-1zM414 389h1v1h-1zM414 389h1v1h-1zM415 401h1v1h-1zM415 386h1v1h-1zM416 388h1v1h-1zM417 392h1v1h-1zM418 393h1v1h-1zM418 409h1v1h-1zM419 394h1v1h-1zM420 397h1v1h-1zM421 401h1v1h-1zM421 397h1v1h-1zM422 386h1v1h-1zM423 396h1v1h-1zM424 401h1v1h-1zM424 393h1v1h-1zM425 386h1v1h-1zM425 399h1v1h-1zM426 409h1v1h-1zM427 389h1v1h-1zM428 399h1v1h-1zM429 388h1v1h-1zM429 394h1v1h-1zM430 390h1v1h-1zM431 401h1v1h-1zM432 399h1v1h-1zM432 388h1v1h-1zM433 401h1v1h-1zM434 387h1v1h-1zM434 397h1v1h-1zM435 399h1v1h-1zM436 399h1v1h-1zM436 399h1v1h-1zM437 395h1v1h-1zM438 392h1v1h-1zM438 402h1v1h-1zM439 395h1v1h-1zM440 385h1v1h-1zM441 396h1v1h-1zM441 411h1v1h-1zM442 390h1v1h-1zM443 387h1v1h-1zM443 388h1v1h-1zM444 386h1v1h-1zM445 408h1v1h-1zM446 380h1v1h-1zM446 402h1v1h-1zM447 386h1v1h-1zM448 393h1v1h-1zM448 410h1v1h-1zM449 397h1v1h-1zM450 395h1v1h-1zM451 384h1v1h-1zM451 399h1v1h-1zM452 393h1v1h-1zM453 402h1v1h-1zM453 397h1v1h-1zM455 401h1v1h-1zM455 394h1v1h-1zM456 402h1v1h-1zM456 395h1v1h-1zM457 394h1v1h-1zM458 389h1v1h-1zM459 392h1v1h-1zM459 395h1v1h-1zM460 392h1v1h-1zM461 385h1v1h-1zM461 394h1v1h-1zM462 393h1v1h-1zM463 400h1v1h-1zM464 398h1v1h-1zM464 401h1v1h-1zM465 392h1v1h-1zM466 400h1v1h-1zM467 387h1v1h-1zM467 388h1v1h-1zM468 384h1v1h-1zM469 394h1v1h-1zM469 398h1v1h-1zM470 394h1v1h-1zM470 392h1v1h-1zM472 381h1v1h-1zM472 394h1v1h-1zM473 387h1v1h-1zM474 394h1v1h-1zM474 385h1v1h-1zM475 391h1v1h-1zM475 395h1v1h-1zM476 395h1v1h-1zM477 387h1v1h-1zM478 387h1v1h-1zM479 400h1v1h-1zM480 401h1v1h-1zM480 395h1v1h-1zM481 387h1v1h-1zM481 389h1v1h-1zM482 391h1v1h-1zM483 404h1v1h-1zM483 392h1v1h-1zM484 387h1v1h-1zM485 401h1v1h-1zM486 382h1v1h-1zM486 387h1v1h-1zM487 394h1v1h-1zM488 386h1v1h-1zM489 393h1v1h-1zM489 390h1v1h-1zM490 395h1v1h-1zM491 394h1v1h-1zM491 399h1v1h-1zM492 391h1v1h-1zM493 399h1v1h-1zM494 400h1v1h-1zM494 392h1v1h-1zM495 388h1v1h-1zM496 391h1v1h-1zM496 396h1v1h-1zM497 396h1v1h-1zM498 405h1v1h-1zM499 391h1v1h-1zM499 400h1v1h-1zM500 408h1v1h-1zM501 399h1v1h-1zM502 410h1v1h-1zM502 398h1v1h-1zM503 394h1v1h-1zM503 395h1v1h-1zM504 401h1v1h-1zM505 408h1v1h-1zM506 401h1v1h-1zM507 402h1v1h-1zM507 397h1v1h-1zM508 396h1v1h-1zM509 387h1v1h-1zM510 400h1v1h-1zM510 393h1v1h-1zM511 395h1v1h-1zM511 382h1v1h-1zM513 381h1v1h-1zM513 389h1v1h-1zM514 393h1v1h-1zM514 390h1v1h-1zM515 389h1v1h-1zM516 399h1v1h-1zM516 386h1v1h-1zM517 394h1v1h-1zM518 389h1v1h-1zM519 404h1v1h-1zM519 400h1v1h-1zM520 397h1v1h-1zM521 391h1v1h-1zM521 398h1v1h-1zM522 391h1v1h-1zM523 399h1v1h-1zM524 402h1v1h-1zM525 407h1v1h-1zM525 402h1v1h-1zM526 389h1v1h-1zM527 400h1v1h-1zM527 387h1v1h-1zM528 400h1v1h-1zM529 391h1v1h-1zM530 395h1v1h-1zM530 396h1v1h-1zM531 390h1v1h-1zM531 399h1v1h-1zM532 396h1v1h-1zM533 395h1v1h-1zM534 411h1v1h-1zM534 397h1v1h-1zM535 388h1v1h-1zM536 400h1v1h-1zM536 398h1v1h-1zM537 410h1v1h-1zM538 389h1v1h-1zM539 394h1v1h-1zM539 389h1v1h-1zM540 403h1v1h-1zM541 380h1v1h-1zM541 384h1v1h-1zM543 397h1v1h-1zM543 405h1v1h-1zM544 403h1v1h-1zM544 397h1v1h-1zM545 386h1v1h-1zM546 410h1v1h-1zM546 396h1v1h-1zM547 401h1v1h-1zM548 395h1v1h-1zM549 402h1v1h-1zM550 394h1v1h-1zM550 401h1v1h-1zM551 400h1v1h-1zM551 401h1v1h-1zM553 395h1v1h-1zM553 400h1v1h-1zM554 394h1v1h-1zM554 394h1v1h-1zM555 403h1v1h-1zM556 394h1v1h-1zM557 393h1v1h-1zM558 410h1v1h-1zM558 392h1v1h-1zM559 394h1v1h-1zM559 385h1v1h-1zM560 390h1v1h-1zM561 397h1v1h-1zM562 398h1v1h-1zM563 404h1v1h-1zM563 390h1v1h-1zM564 387h1v1h-1zM565 394h1v1h-1zM565 387h1v1h-1zM566 395h1v1h-1zM566 400h1v1h-1zM567 394h1v1h-1zM568 387h1v1h-1zM569 403h1v1h-1zM569 394h1v1h-1zM570 396h1v1h-1zM571 401h1v1h-1zM571 390h1v1h-1zM573 398h1v1h-1zM573 403h1v1h-1zM574 386h1v1h-1zM575 394h1v1h-1zM575 394h1v1h-1zM576 391h1v1h-1zM577 399h1v1h-1zM578 398h1v1h-1zM578 380h1v1h-1zM579 403h1v1h-1zM580 390h1v1h-1zM581 411h1v1h-1zM581 394h1v1h-1zM582 383h1v1h-1zM583 391h1v1h-1zM583 401h1v1h-1zM584 389h1v1h-1zM585 394h1v1h-1zM585 400h1v1h-1zM586 398h1v1h-1zM587 395h1v1h-1zM588 405h1v1h-1zM588 405h1v1h-1zM589 396h1v1h-1zM589 391h1v1h-1zM590 387h1v1h-1zM591 389h1v1h-1zM592 402h1v1h-1zM592 392h1v1h-1zM593 405h1v1h-1zM594 388h1v1h-1zM595 382h1v1h-1zM596 386h1v1h-1zM596 407h1v1h-1zM596 396h1v1h-1zM598 397h1v1h-1zM598 397h1v1h-1zM599 392h1v1h-1zM600 408h1v1h-1zM601 393h1v1h-1zM601 397h1v1h-1zM602 394h1v1h-1zM602 393h1v1h-1zM603 397h1v1h-1zM604 390h1v1h-1zM605 404h1v1h-1zM605 390h1v1h-1zM606 381h1v1h-1zM607 392h1v1h-1zM608 386h1v1h-1zM608 386h1v1h-1zM609 391h1v1h-1zM609 397h1v1h-1zM610 391h1v1h-1zM611 380h1v1h-1zM612 388h1v1h-1zM612 401h1v1h-1zM613 385h1v1h-1zM614 402h1v1h-1zM615 387h1v1h-1zM616 395h1v1h-1zM616 401h1v1h-1zM617 405h1v1h-1zM617 390h1v1h-1zM618 392h1v1h-1zM619 397h1v1h-1zM620 408h1v1h-1zM621 399h1v1h-1zM621 381h1v1h-1zM622 401h1v1h-1zM622 392h1v1h-1zM623 384h1v1h-1zM624 399h1v1h-1zM624 395h1v1h-1zM625 384h1v1h-1zM626 400h1v1h-1zM626 388h1v1h-1zM627 398h1v1h-1zM628 404h1v1h-1zM629 386h1v1h-1zM630 406h1v1h-1zM630 387h1v1h-1zM631 401h1v1h-1zM632 400h1v1h-1zM632 395h1v1h-1zM633 400h1v1h-1zM634 395h1v1h-1zM635 388h1v1h-1zM635 389h1v1h-1zM636 393h1v1h-1zM637 381h1v1h-1zM637 394h1v1h-1zM638 400h1v1h-1zM639 401h1v1h-1zM639 381h1v1h-1zM641 386h1v1h-1zM641 386h1v1h-1zM642 400h1v1h-1zM642 405h1v1h-1zM643 391h1v1h-1zM644 392h1v1h-1zM645 403h1v1h-1zM645 399h1v1h-1zM646 388h1v1h-1zM647 406h1v1h-1zM648 403h1v1h-1zM649 396h1v1h-1zM649 394h1v1h-1zM650 395h1v1h-1zM651 381h1v1h-1zM651 408h1v1h-1zM652 391h1v1h-1zM653 399h1v1h-1zM653 394h1v1h-1zM654 389h1v1h-1zM655 407h1v1h-1zM655 389h1v1h-1zM656 399h1v1h-1zM657 400h1v1h-1zM657 400h1v1h-1zM659 388h1v1h-1zM659 397h1v1h-1zM660 391h1v1h-1zM661 399h1v1h-1zM661 402h1v1h-1zM662 401h1v1h-1zM663 387h1v1h-1zM663 402h1v1h-1zM664 403h1v1h-1zM665 392h1v1h-1zM665 387h1v1h-1zM666 392h1v1h-1zM667 398h1v1h-1zM668 387h1v1h-1zM668 382h1v1h-1zM669 397h1v1h-1zM670 392h1v1h-1zM670 389h1v1h-1zM671 397h1v1h-1zM672 381h1v1h-1zM673 382h1v1h-1zM674 392h1v1h-1zM674 393h1v1h-1zM675 388h1v1h-1zM676 401h1v1h-1zM676 388h1v1h-1zM677 392h1v1h-1zM678 393h1v1h-1zM678 400h1v1h-1zM679 402h1v1h-1zM680 393h1v1h-1zM681 389h1v1h-1zM681 397h1v1h-1zM682 401h1v1h-1zM683 391h1v1h-1zM683 394h1v1h-1zM684 394h1v1h-1zM685 390h1v1h-1zM686 382h1v1h-1zM686 397h1v1h-1zM687 390h1v1h-1zM688 386h1v1h-1zM689 386h1v1h-1zM689 400h1v1h-1zM689 390h1v1h-1zM691 407h1v1h-1zM691 391h1v1h-1zM692 393h1v1h-1zM692 390h1v1h-1zM693 383h1v1h-1zM694 396h1v1h-1zM695 409h1v1h-1zM696 393h1v1h-1zM697 388h1v1h-1zM697 380h1v1h-1zM698 394h1v1h-1zM698 395h1v1h-1zM699 393h1v1h-1zM700 389h1v1h-1zM701 386h1v1h-1zM701 393h1v1h-1zM702 391h1v1h-1zM703 399h1v1h-1zM703 395h1v1h-1zM704 392h1v1h-1zM705 404h1v1h-1zM705 382h1v1h-1zM706 390h1v1h-1zM707 398h1v1h-1zM708 388h1v1h-1zM708 392h1v1h-1zM709 393h1v1h-1zM710 400h1v1h-1zM711 401h1v1h-1zM712 401h1v1h-1zM712 388h1v1h-1zM712 402h1v1h-1zM713 394h1v1h-1zM715 388h1v1h-1zM715 405h1v1h-1zM715 394h1v1h-1zM716 407h1v1h-1zM717 389h1v1h-1zM718 400h1v1h-1zM718 394h1v1h-1zM719 391h1v1h-1zM720 386h1v1h-1zM721 383h1v1h-1zM721 400h1v1h-1zM722 401h1v1h-1zM722 399h1v1h-1zM723 395h1v1h-1zM724 386h1v1h-1zM725 393h1v1h-1zM726 404h1v1h-1zM726 410h1v1h-1zM727 399h1v1h-1zM728 386h1v1h-1zM728 402h1v1h-1zM729 394h1v1h-1zM730 391h1v1h-1zM731 397h1v1h-1zM731 395h1v1h-1zM732 394h1v1h-1zM733 390h1v1h-1zM733 398h1v1h-1zM734 391h1v1h-1zM735 406h1v1h-1zM735 398h1v1h-1zM736 383h1v1h-1zM737 392h1v1h-1zM738 400h1v1h-1zM738 402h1v1h-1zM739 390h1v1h-1zM740 389h1v1h-1zM740 389h1v1h-1zM742 394h1v1h-1zM742 393h1v1h-1zM743 399h1v1h-1zM744 394h1v1h-1zM744 391h1v1h-1zM745 406h1v1h-1zM746 381h1v1h-1zM747 393h1v1h-1zM747 391h1v1h-1zM748 393h1v1h-1zM749 398h1v1h-1zM749 387h1v1h-1zM750 395h1v1h-1zM751 390h1v1h-1zM752 404h1v1h-1zM752 395h1v1h-1zM753 388h1v1h-1zM754 393h1v1h-1zM754 397h1v1h-1zM755 385h1v1h-1zM756 381h1v1h-1zM756 387h1v1h-1zM757 387h1v1h-1zM758 403h1v1h-1zM758 400h1v1h-1zM759 389h1v1h-1zM760 400h1v1h-1zM761 392h1v1h-1zM762 395h1v1h-1zM762 393h1v1h-1zM763 397h1v1h-1zM764 386h1v1h-1zM764 386h1v1h-1zM765 389h1v1h-1zM766 406h1v1h-1zM766 394h1v1h-1zM767 399h1v1h-1zM768 401h1v1h-1zM769 395h1v1h-1zM770 391h1v1h-1zM770 408h1v1h-1zM771 386h1v1h-1zM772 390h1v1h-1zM772 396h1v1h-1zM773 399h1v1h-1zM774 389h1v1h-1z"/>
<path fill="#ffff00" d="M244 397h1v1h-1zM245 406h1v1h-1zM246 404h1v1h-1zM246 403h1v1h-1zM247 393h1v1h-1zM247 402h1v1h-1zM248 390h1v1h-1zM249 392h1v1h-1zM250 397h1v1h-1zM251 399h1v1h-1zM251 385h1v1h-1zM252 392h1v1h-1zM253 398h1v1h-1zM254 392h1v1h-1zM254 403h1v1h-1zM255 401h1v1h-1zM255 403h1v1h-1zM256 401h1v1h-1zM257 402h1v1h-1zM257 399h1v1h-1zM258 395h1v1h-1zM259 390h1v1h-1zM260 410h1v1h-1zM260 401h1v1h-1zM261 381h1v1h-1zM262 391h1v1h-1zM263 401h1v1h-1zM263 392h1v1h-1zM264 402h1v1h-1zM265 399h1v1h-1zM265 399h1v1h-1zM266 403h1v1h-1zM266 382h1v1h-1zM267 384h1v1h-1zM268 396h1v1h-1zM269 393h1v1h-1zM269 400h1v1h-1zM270 395h1v1h-1zM271 392h1v1h-1zM271 387h1v1h-1zM272 391h1v1h-1zM273 397h1v1h-1zM274 396h1v1h-1zM274 391h1v1h-1zM275 392h1v1h-1zM275 388h1v1h-1zM277 395h1v1h-1zM277 400h1v1h-1zM278 403h1v1h-1zM279 406h1v1h-1zM279 386h1v1h-1zM280 401h1v1h-1zM280 401h1v1h-1zM281 392h1v1h-1zM282 384h1v1h-1zM283 406h1v1h-1zM283 391h1v1h-1zM284 391h1v1h-1zM285 402h1v1h-1zM286 390h1v1h-1zM286 402h1v1h-1zM287 402h1v1h-1zM287 389h1v1h-1zM288 402h1v1h-1zM289 406h1v1h-1zM289 404h1v1h-1zM290 388h1v1h-1zM291 391h1v1h-1zM292 402h1v1h-1zM293 382h1v1h-1zM293 391h1v1h-1zM294 405h1v1h-1zM295 384h1v1h-1zM295 390h1v1h-1zM296 385h1v1h-1zM297 408h1v1h-1zM297 393h1v1h-1zM298 392h1v1h-1zM299 392h1v1h-1zM299 399h1v1h-1zM300 394h1v1h-1zM301 390h1v1h-1zM302 405h1v1h-1zM302 396h1v1h-1zM303 409h1v1h-1zM303 403h1v1h-1zM304 394h1v1h-1zM305 394h1v1h-1zM306 400h1v1h-1zM306 398h1v1h-1zM307 399h1v1h-1zM308 391h1v1h-1zM308 391h1v1h-1zM309 388h1v1h-1zM310 408h1v1h-1zM310 402h1v1h-1zM311 393h1v1h-1zM312 405h1v1h-1zM313 398h1v1h-1zM313 389h1v1h-1zM314 387h1v1h-1zM315 396h1v1h-1zM316 396h1v1h-1zM316 388h1v1h-1zM317 402h1v1h-1zM317 390h1v1h-1zM319 407h1v1h-1zM319 395h1v1h-1zM320 394h1v1h-1zM320 402h1v1h-1zM321 388h1v1h-1zM321 402h1v1h-1zM322 409h1v1h-1zM323 397h1v1h-1zM324 392h1v1h-1zM324 390h1v1h-1zM325 398h1v1h-1zM326 400h1v1h-1zM327 395h1v1h-1zM327 395h1v1h-1zM328 394h1v1h-1zM329 403h1v1h-1zM330 401h1v1h-1zM330 402h1v1h-1zM331 397h1v1h-1zM331 388h1v1h-1zM332 395h1v1h-1zM333 400h1v1h-1zM334 403h1v1h-1zM334 405h1v1h-1zM335 399h1v1h-1zM336 393h1v1h-1zM336 400h1v1h-1zM337 394h1v1h-1zM338 404h1v1h-1zM338 383h1v1h-1zM339 398h1v1h-1zM340 400h1v1h-1zM340 396h1v1h-1zM341 405h1v1h-1zM342 408h1v1h-1zM343 398h1v1h-1zM344 401h1v1h-1zM344 392h1v1h-1zM345 390h1v1h-1zM346 406h1v1h-1zM346 392h1v1h-1zM347 393h1v1h-1zM348 388h1v1h-1zM348 395h1v1h-1zM349 393h1v1h-1zM349 393h1v1h-1zM350 396h1v1h-1zM351 387h1v1h-1zM351 393h1v1h-1zM353 395h1v1h-1zM353 408h1v1h-1zM354 390h1v1h-1zM355 400h1v1h-1zM355 404h1v1h-1zM356 389h1v1h-1zM357 389h1v1h-1zM358 387h1v1h-1zM358 391h1v1h-1zM359 388h1v1h-1zM360 386h1v1h-1zM360 388h1v1h-1zM361 402h1v1h-1zM361 394h1v1h-1zM362 402h1v1h-1zM363 410h1v1h-1zM364 385h1v1h-1zM364 411h1v1h-1zM365 391h1v1h-1zM366 388h1v1h-1zM366 393h1v1h-1zM367 401h1v1h-1zM368 407h1v1h-1zM369 400h1v1h-1zM369 402h1v1h-1zM370 397h1v1h-1zM370 402h1v1h-1zM371 383h1v1h-1zM372 393h1v1h-1zM373 407h1v1h-1zM373 404h1v1h-1zM374 402h1v1h-1zM375 392h1v1h-1zM375 389h1v1h-1zM376 395h1v1h-1zM377 392h1v1h-1zM377 402h1v1h-1zM378 399h1v1h-1zM379 393h1v1h-1zM380 398h1v1h-1zM380 398h1v1h-1zM381 397h1v1h-1zM382 390h1v1h-1zM382 399h1v1h-1zM383 402h1v1h-1zM384 399h1v1h-1zM384 394h1v1h-1zM385 399h1v1h-1zM386 406h1v1h-1zM387 401h1v1h-1zM387 390h1v1h-1zM388 411h1v1h-1zM388 397h1v1h-1zM389 402h1v1h-1zM390 398h1v1h-1zM391 410h1v1h-1zM391 400h1v1h-1zM393 391h1v1h-1zM393 381h1v1h-1zM394 403h1v1h-1zM394 389h1v1h-1zM395 409h1v1h-1zM396 403h1v1h-1zM396 382h1v1h-1zM397 403h1v1h-1zM398 391h1v1h-1zM398 395h1v1h-1zM399 408h1v1h-1zM400 398h1v1h-1zM400 397h1v1h-1zM401 382h1v1h-1zM402 399h1v1h-1zM403 402h1v1h-1zM403 402h1v1h-1zM404 391h1v1h-1zM405 385h1v1h-1zM406 388h1v1h-1zM406 390h1v1h-1zM407 389h1v1h-1zM408 390h1v1h-1zM408 397h1v1h-1zM409 405h1v1h-1zM410 394h1v1h-1zM410 403h1v1h-1zM411 406h1v1h-1zM412 390h1v1h-1zM412 392h1v1h-1zM413 383h1v1h-1zM414 397h1v1h-1zM414 391h1v1h-1zM416 405h1v1h-1zM416 391h1v1h-1zM416 395h1v1h-1zM417 408h1v1h-1zM418 395h1v1h-1zM419 383h1v1h-1zM419 403h1v1h-1zM420 395h1v1h-1zM421 388h1v1h-1zM421 390h1v1h-1zM422 396h1v1h-1zM423 402h1v1h-1zM424 398h1v1h-1zM424 393h1v1h-1zM425 394h1v1h-1zM426 403h1v1h-1zM426 409h1v1h-1zM427 400h1v1h-1zM427 393h1v1h-1zM429 394h1v1h-1zM429 409h1v1h-1zM430 381h1v1h-1zM431 398h1v1h-1zM431 400h1v1h-1zM432 393h1v1h-1zM433 400h1v1h-1zM433 388h1v1h-1zM434 410h1v1h-1zM435 409h1v1h-1zM436 393h1v1h-1zM436 387h1v1h-1zM437 387h1v1h-1zM438 396h1v1h-1zM438 399h1v1h-1zM439 392h1v1h-1zM439 395h1v1h-1zM441 406h1v1h-1zM441 395h1v1h-1zM441 403h1v1h-1zM442 398h1v1h-1zM443 402h1v1h-1zM444 381h1v1h-1zM445 400h1v1h-1zM445 401h1v1h-1zM446 381h1v1h-1zM447 391h1v1h-1zM448 404h1v1h-1zM448 406h1v1h-1zM449 388h1v1h-1zM449 396h1v1h-1zM450 396h1v1h-1zM451 400h1v1h-1zM452 411h1v1h-1zM452 389h1v1h-1zM453 399h1v1h-1zM453 390h1v1h-1zM454 410h1v1h-1zM455 390h1v1h-1zM456 382h1v1h-1zM456 390h1v1h-1zM457 389h1v1h-1zM458 403h1v1h-1zM459 410h1v1h-1zM459 401h1v1h-1zM460 393h1v1h-1zM460 409h1v1h-1zM461 386h1v1h-1zM462 388h1v1h-1zM463 400h1v1h-1zM464 388h1v1h-1zM464 411h1v1h-1zM465 385h1v1h-1zM465 403h1v1h-1zM466 390h1v1h-1zM466 400h1v1h-1zM468 403h1v1h-1zM468 389h1v1h-1zM469 391h1v1h-1zM469 393h1v1h-1zM470 397h1v1h-1zM471 392h1v1h-1zM472 390h1v1h-1zM473 401h1v1h-1zM473 385h1v1h-1zM474 383h1v1h-1zM474 395h1v1h-1zM475 393h1v1h-1zM476 401h1v1h-1zM477 392h1v1h-1zM477 398h1v1h-1zM478 384h1v1h-1zM479 382h1v1h-1zM480 402h1v1h-1zM480 397h1v1h-1zM481 387h1v1h-1zM481 401h1v1h-1zM482 397h1v1h-1zM483 392h1v1h-1zM484 395h1v1h-1zM484 396h1v1h-1zM485 383h1v1h-1zM486 402h1v1h-1zM486 397h1v1h-1zM487 389h1v1h-1zM488 387h1v1h-1zM488 394h1v1h-1zM489 388h1v1h-1zM490 391h1v1h-1zM491 388h1v1h-1zM491 395h1v1h-1zM492 405h1v1h-1zM493 399h1v1h-1zM493 390h1v1h-1zM494 382h1v1h-1zM495 397h1v1h-1zM496 410h1v1h-1zM496 398h1v1h-1zM497 392h1v1h-1zM497 388h1v1h-1zM498 397h1v1h-1zM499 402h1v1h-1zM500 393h1v1h-1zM500 399h1v1h-1zM501 389h1v1h-1zM502 391h1v1h-1zM502 393h1v1h-1zM503 388h1v1h-1zM504 388h1v1h-1zM504 393h1v1h-1zM505 393h1v1h-1zM506 395h1v1h-1zM507 392h1v1h-1zM507 408h1v1h-1zM508 402h1v1h-1zM509 400h1v1h-1zM510 395h1v1h-1zM510 386h1v1h-1zM511 398h1v1h-1zM511 388h1v1h-1zM512 400h1v1h-1zM513 392h1v1h-1zM513 398h1v1h-1zM515 390h1v1h-1zM515 387h1v1h-1zM516 399h1v1h-1zM516 397h1v1h-1zM517 396h1v1h-1zM517 394h1v1h-1zM518 396h1v1h-1zM519 386h1v1h-1zM520 397h1v1h-1zM520 409h1v1h-1zM521 402h1v1h-1zM522 395h1v1h-1zM523 404h1v1h-1zM523 392h1v1h-1zM524 384h1v1h-1zM525 397h1v1h-1zM526 407h1v1h-1zM526 397h1v1h-1zM527 402h1v1h-1zM528 405h1v1h-1zM528 403h1v1h-1zM529 395h1v1h-1zM529 396h1v1h-1zM530 399h1v1h-1zM531 398h1v1h-1zM532 391h1v1h-1zM533 399h1v1h-1zM533 393h1v1h-1zM533 394h1v1h-1zM534 385h1v1h-1zM535 400h1v1h-1zM536 398h1v1h-1zM537 400h1v1h-1zM537 390h1v1h-1zM538 406h1v1h-1zM539 400h1v1h-1zM539 387h1v1h-1zM540 399h1v1h-1zM541 401h1v1h-1zM542 410h1v1h-1zM542 389h1v1h-1zM543 397h1v1h-1zM544 407h1v1h-1zM544 389h1v1h-1zM545 399h1v1h-1zM545 383h1v1h-1zM546 397h1v1h-1zM547 388h1v1h-1zM548 409h1v1h-1zM549 395h1v1h-1zM549 384h1v1h-1zM550 396h1v1h-1zM550 399h1v1h-1zM551 403h1v1h-1zM552 388h1v1h-1zM552 394h1v1h-1zM553 399h1v1h-1zM554 403h1v1h-1zM555 399h1v1h-1zM555 395h1v1h-1zM556 393h1v1h-1zM557 394h1v1h-1zM558 407h1v1h-1zM558 408h1v1h-1zM559 383h1v1h-1zM560 394h1v1h-1zM560 399h1v1h-1zM561 392h1v1h-1zM562 387h1v1h-1zM563 398h1v1h-1zM563 389h1v1h-1zM564 400h1v1h-1zM565 403h1v1h-1zM565 389h1v1h-1zM566 397h1v1h-1zM566 405h1v1h-1zM567 388h1v1h-1zM568 391h1v1h-1zM569 400h1v1h-1zM569 397h1v1h-1zM570 401h1v1h-1zM571 390h1v1h-1zM571 405h1v1h-1zM572 396h1v1h-1zM573 408h1v1h-1zM574 388h1v1h-1zM575 402h1v1h-1zM575 396h1v1h-1zM575 389h1v1h-1zM576 391h1v1h-1zM577 399h1v1h-1zM578 390h1v1h-1zM578 402h1v1h-1zM579 403h1v1h-1zM580 389h1v1h-1zM580 386h1v1h-1zM581 400h1v1h-1zM582 403h1v1h-1zM582 392h1v1h-1zM584 391h1v1h-1zM584 399h1v1h-1zM585 409h1v1h-1zM585 408h1v1h-1zM586 398h1v1h-1zM587 397h1v1h-1zM588 389h1v1h-1zM588 396h1v1h-1zM589 392h1v1h-1zM590 391h1v1h-1zM590 391h1v1h-1zM591 395h1v1h-1zM592 396h1v1h-1zM593 389h1v1h-1zM593 392h1v1h-1zM594 401h1v1h-1zM594 404h1v1h-1zM595 392h1v1h-1zM596 401h1v1h-1zM597 395h1v1h-1zM597 406h1v1h-1zM598 396h1v1h-1zM599 394h1v1h-1zM599 390h1v1h-1zM600 401h1v1h-1zM601 408h1v1h-1zM601 389h1v1h-1zM602 382h1v1h-1zM603 388h1v1h-1zM603 398h1v1h-1zM604 399h1v1h-1zM605 392h1v1h-1zM606 399h1v1h-1zM606 391h1v1h-1zM607 400h1v1h-1zM608 400h1v1h-1zM609 395h1v1h-1zM609 399h1v1h-1zM610 383h1v1h-1zM610 385h1v1h-1zM611 391h1v1h-1zM612 392h1v1h-1zM612 383h1v1h-1zM613 388h1v1h-1zM614 384h1v1h-1zM615 395h1v1h-1zM615 389h1v1h-1zM616 392h1v1h-1zM617 402h1v1h-1zM618 383h1v1h-1zM618 398h1v1h-1zM619 397h1v1h-1zM619 403h1v1h-1zM620 384h1v1h-1zM621 398h1v1h-1zM622 391h1v1h-1zM623 388h1v1h-1zM623 395h1v1h-1zM624 402h1v1h-1zM624 406h1v1h-1zM625 411h1v1h-1zM626 399h1v1h-1zM626 392h1v1h-1zM627 403h1v1h-1zM628 402h1v1h-1zM628 401h1v1h-1zM630 396h1v1h-1zM630 395h1v1h-1zM630 388h1v1h-1zM631 393h1v1h-1zM632 393h1v1h-1zM633 404h1v1h-1zM634 406h1v1h-1zM634 400h1v1h-1zM635 403h1v1h-1zM636 399h1v1h-1zM637 390h1v1h-1zM637 408h1v1h-1zM638 392h1v1h-1zM638 401h1v1h-1zM639 401h1v1h-1zM640 394h1v1h-1zM640 387h1v1h-1zM641 403h1v1h-1zM642 393h1v1h-1zM642 401h1v1h-1zM643 399h1v1h-1zM644 394h1v1h-1zM645 401h1v1h-1zM645 392h1v1h-1zM646 403h1v1h-1zM647 403h1v1h-1zM647 400h1v1h-1zM648 395h1v1h-1zM649 387h1v1h-1zM650 391h1v1h-1zM650 390h1v1h-1zM651 403h1v1h-1zM652 409h1v1h-1zM653 410h1v1h-1zM653 398h1v1h-1zM654 395h1v1h-1zM654 386h1v1h-1zM655 388h1v1h-1zM656 391h1v1h-1zM657 401h1v1h-1zM657 396h1v1h-1zM658 391h1v1h-1zM658 393h1v1h-1zM659 381h1v1h-1zM660 399h1v1h-1zM661 408h1v1h-1zM661 400h1v1h-1zM662 395h1v1h-1zM663 409h1v1h-1zM663 401h1v1h-1zM664 392h1v1h-1zM665 396h1v1h-1zM666 393h1v1h-1zM666 381h1v1h-1zM667 395h1v1h-1zM667 402h1v1h-1zM668 399h1v1h-1zM669 384h1v1h-1zM670 388h1v1h-1zM671 402h1v1h-1zM671 400h1v1h-1zM672 400h1v1h-1zM672 386h1v1h-1zM673 403h1v1h-1zM674 398h1v1h-1zM675 384h1v1h-1zM675 399h1v1h-1zM676 392h1v1h-1zM677 403h1v1h-1zM678 399h1v1h-1zM678 384h1v1h-1zM679 405h1v1h-1zM679 390h1v1h-1zM680 387h1v1h-1zM681 392h1v1h-1zM682 403h1v1h-1zM682 393h1v1h-1zM683 392h1v1h-1zM684 388h1v1h-1zM684 390h1v1h-1zM685 403h1v1h-1zM686 390h1v1h-1zM687 393h1v1h-1zM688 406h1v1h-1zM688 387h1v1h-1zM688 394h1v1h-1zM690 400h1v1h-1zM690 398h1v1h-1zM691 389h1v1h-1zM692 386h1v1h-1zM692 396h1v1h-1zM693 390h1v1h-1zM693 405h1v1h-1zM694 402h1v1h-1zM695 385h1v1h-1zM696 389h1v1h-1zM696 403h1v1h-1zM697 392h1v1h-1zM697 399h1v1h-1zM698 388h1v1h-1zM699 411h1v1h-1zM700 402h1v1h-1zM701 409h1v1h-1zM701 387h1v1h-1zM702 389h1v1h-1zM702 408h1v1h-1zM703 405h1v1h-1zM704 387h1v1h-1zM705 393h1v1h-1zM705 397h1v1h-1zM706 398h1v1h-1zM707 391h1v1h-1zM707 405h1v1h-1zM708 400h1v1h-1zM709 382h1v1h-1zM709 394h1v1h-1zM710 390h1v1h-1zM711 387h1v1h-1zM712 401h1v1h-1zM712 399h1v1h-1zM713 399h1v1h-1zM713 388h1v1h-1zM714 402h1v1h-1zM715 390h1v1h-1zM715 396h1v1h-1zM716 394h1v1h-1zM717 399h1v1h-1zM718 397h1v1h-1zM718 403h1v1h-1zM719 387h1v1h-1zM720 393h1v1h-1zM721 390h1v1h-1zM721 403h1v1h-1zM722 407h1v1h-1zM723 399h1v1h-1zM723 399h1v1h-1zM724 397h1v1h-1zM725 395h1v1h-1zM726 405h1v1h-1zM726 389h1v1h-1zM727 403h1v1h-1zM728 388h1v1h-1zM728 406h1v1h-1zM729 390h1v1h-1zM730 381h1v1h-1zM730 396h1v1h-1zM731 408h1v1h-1zM732 393h1v1h-1zM733 395h1v1h-1zM733 396h1v1h-1zM734 390h1v1h-1zM734 404h1v1h-1zM735 409h1v1h-1zM736 395h1v1h-1zM737 388h1v1h-1zM738 403h1v1h-1zM738 391h1v1h-1zM739 403h1v1h-1zM740 385h1v1h-1zM740 388h1v1h-1zM741 383h1v1h-1zM741 395h1v1h-1zM743 395h1v1h-1zM743 400h1v1h-1zM744 388h1v1h-1zM744 391h1v1h-1zM745 399h1v1h-1zM746 402h1v1h-1zM746 400h1v1h-1zM747 394h1v1h-1zM748 388h1v1h-1zM749 391h1v1h-1zM749 399h1v1h-1zM750 400h1v1h-1zM751 407h1v1h-1zM751 394h1v1h-1zM752 400h1v1h-1zM753 386h1v1h-1zM753 393h1v1h-1zM754 395h1v1h-1zM755 389h1v1h-1zM756 408h1v1h-1zM756 400h1v1h-1zM757 395h1v1h-1zM758 392h1v1h-1zM758 387h1v1h-1zM759 397h1v1h-1zM760 397h1v1h-1zM760 384h1v1h-1zM761 394h1v1h-1zM762 408h1v1h-1zM763 392h1v1h-1zM763 387h1v1h-1zM764 399h1v1h-1zM764 389h1v1h-1zM765 395h1v1h-1zM766 390h1v1h-1zM766 393h1v1h-1zM767 388h1v1h-1zM768 392h1v1h-1zM769 383h1v1h-1zM770 396h1v1h-1zM770 390h1v1h-1zM771 395h1v1h-1zM772 405h1v1h-1zM772 404h1v1h-1zM773 395h1v1h-1zM773 391h1v1h-1z"/>
<path fill="#0a7cff" d="M244 375h1v1h-1zM245 385h1v1h-1zM246 386h1v1h-1zM247 371h1v1h-1zM248 377h1v1h-1zM249 370h1v1h-1zM250 376h1v1h-1zM251 379h1v1h-1zM251 382h1v1h-1zM252 376h1v1h-1zM253 376h1v1h-1zM254 380h1v1h-1zM255 383h1v1h-1zM256 381h1v1h-1zM257 373h1v1h-1zM257 384h1v1h-1zM258 370h1v1h-1zM259 372h1v1h-1zM260 381h1v1h-1zM261 386h1v1h-1zM262 387h1v1h-1zM262 383h1v1h-1zM263 381h1v1h-1zM264 381h1v1h-1zM265 383h1v1h-1zM266 376h1v1h-1zM266 377h1v1h-1zM267 379h1v1h-1zM268 382h1v1h-1zM269 386h1v1h-1zM270 379h1v1h-1zM271 376h1v1h-1zM272 373h1v1h-1zM273 382h1v1h-1zM274 383h1v1h-1zM275 374h1v1h-1zM275 375h1v1h-1zM276 376h1v1h-1zM277 372h1v1h-1zM278 375h1v1h-1zM279 384h1v1h-1zM279 378h1v1h-1zM280 379h1v1h-1zM281 385h1v1h-1zM282 374h1v1h-1zM283 382h1v1h-1zM284 378h1v1h-1zM285 368h1v1h-1zM286 378h1v1h-1zM287 378h1v1h-1zM288 370h1v1h-1zM288 387h1v1h-1zM289 384h1v1h-1zM290 376h1v1h-1zM291 371h1v1h-1zM292 383h1v1h-1zM292 375h1v1h-1zM293 374h1v1h-1zM294 379h1v1h-1zM294 376h1v1h-1zM296 371h1v1h-1zM296 375h1v1h-1zM298 377h1v1h-1zM298 382h1v1h-1zM299 379h1v1h-1zM300 386h1v1h-1zM301 386h1v1h-1zM302 368h1v1h-1zM303 381h1v1h-1zM303 377h1v1h-1zM305 383h1v1h-1zM305 380h1v1h-1zM306 370h1v1h-1zM307 377h1v1h-1zM308 378h1v1h-1zM309 380h1v1h-1zM310 372h1v1h-1zM311 379h1v1h-1zM311 375h1v1h-1zM312 387h1v1h-1zM313 375h1v1h-1zM314 381h1v1h-1zM315 372h1v1h-1zM315 379h1v1h-1zM317 374h1v1h-1zM317 381h1v1h-1zM318 377h1v1h-1zM318 375h1v1h-1zM320 379h1v1h-1zM320 377h1v1h-1zM321 375h1v1h-1zM323 376h1v1h-1zM323 385h1v1h-1zM324 385h1v1h-1zM325 376h1v1h-1zM325 383h1v1h-1zM327 371h1v1h-1zM328 377h1v1h-1zM328 380h1v1h-1zM329 377h1v1h-1zM330 375h1v1h-1zM331 383h1v1h-1zM331 379h1v1h-1zM332 385h1v1h-1zM333 385h1v1h-1zM334 384h1v1h-1zM335 383h1v1h-1zM336 378h1v1h-1zM336 376h1v1h-1zM338 378h1v1h-1zM338 371h1v1h-1zM339 378h1v1h-1zM340 380h1v1h-1zM341 380h1v1h-1zM341 380h1v1h-1zM343 377h1v1h-1zM343 383h1v1h-1zM345 376h1v1h-1zM345 377h1v1h-1zM346 376h1v1h-1zM347 376h1v1h-1zM348 378h1v1h-1zM349 382h1v1h-1zM349 379h1v1h-1zM350 376h1v1h-1zM351 374h1v1h-1zM352 382h1v1h-1zM353 384h1v1h-1zM354 376h1v1h-1zM355 383h1v1h-1zM356 379h1v1h-1zM357 372h1v1h-1zM358 378h1v1h-1zM358 377h1v1h-1zM359 374h1v1h-1zM360 379h1v1h-1zM361 380h1v1h-1zM361 370h1v1h-1zM363 379h1v1h-1zM363 381h1v1h-1zM364 382h1v1h-1zM365 374h1v1h-1zM365 373h1v1h-1zM366 376h1v1h-1zM367 381h1v1h-1zM368 375h1v1h-1zM369 376h1v1h-1zM370 386h1v1h-1zM371 378h1v1h-1zM371 380h1v1h-1zM373 372h1v1h-1zM374 378h1v1h-1zM374 373h1v1h-1zM376 380h1v1h-1zM376 382h1v1h-1zM377 380h1v1h-1zM377 379h1v1h-1zM379 384h1v1h-1zM379 375h1v1h-1zM380 378h1v1h-1zM381 370h1v1h-1zM382 381h1v1h-1zM383 374h1v1h-1zM383 375h1v1h-1zM385 379h1v1h-1zM385 373h1v1h-1zM387 376h1v1h-1zM387 378h1v1h-1zM388 375h1v1h-1zM389 370h1v1h-1zM390 368h1v1h-1zM390 373h1v1h-1zM391 384h1v1h-1zM393 377h1v1h-1zM393 374h1v1h-1zM394 381h1v1h-1zM395 377h1v1h-1zM395 381h1v1h-1zM397 383h1v1h-1zM397 382h1v1h-1zM398 379h1v1h-1zM399 375h1v1h-1zM400 376h1v1h-1zM401 388h1v1h-1zM402 379h1v1h-1zM403 387h1v1h-1zM404 379h1v1h-1zM405 381h1v1h-1zM405 376h1v1h-1zM406 384h1v1h-1zM407 377h1v1h-1zM408 378h1v1h-1zM409 372h1v1h-1zM409 380h1v1h-1zM410 374h1v1h-1zM411 370h1v1h-1zM412 384h1v1h-1zM413 375h1v1h-1zM413 378h1v1h-1zM415 375h1v1h-1zM415 379h1v1h-1zM416 372h1v1h-1zM417 385h1v1h-1zM418 373h1v1h-1zM419 388h1v1h-1zM419 380h1v1h-1zM420 378h1v1h-1zM421 373h1v1h-1zM422 373h1v1h-1zM423 378h1v1h-1zM424 383h1v1h-1zM425 372h1v1h-1zM425 382h1v1h-1zM426 375h1v1h-1zM427 380h1v1h-1zM428 375h1v1h-1zM429 374h1v1h-1zM430 383h1v1h-1zM431 378h1v1h-1zM432 381h1v1h-1zM433 382h1v1h-1zM433 381h1v1h-1zM434 379h1v1h-1zM435 381h1v1h-1zM436 378h1v1h-1zM437 377h1v1h-1zM437 384h1v1h-1zM439 379h1v1h-1zM439 378h1v1h-1zM440 369h1v1h-1zM441 381h1v1h-1zM442 376h1v1h-1zM443 382h1v1h-1zM444 379h1v1h-1zM444 377h1v1h-1zM445 369h1v1h-1zM447 386h1v1h-1zM447 384h1v1h-1zM448 379h1v1h-1zM449 381h1v1h-1zM449 384h1v1h-1zM450 368h1v1h-1zM451 378h1v1h-1zM452 375h1v1h-1zM453 380h1v1h-1zM454 375h1v1h-1zM455 380h1v1h-1zM455 379h1v1h-1zM457 379h1v1h-1zM458 378h1v1h-1zM458 377h1v1h-1zM459 378h1v1h-1zM460 375h1v1h-1zM460 385h1v1h-1zM462 377h1v1h-1zM462 376h1v1h-1zM463 386h1v1h-1zM464 375h1v1h-1zM465 380h1v1h-1zM466 385h1v1h-1zM467 377h1v1h-1zM468 378h1v1h-1zM468 385h1v1h-1zM469 375h1v1h-1zM470 379h1v1h-1zM471 371h1v1h-1zM472 379h1v1h-1zM473 383h1v1h-1zM474 382h1v1h-1zM474 369h1v1h-1zM475 382h1v1h-1zM476 374h1v1h-1zM477 379h1v1h-1zM478 378h1v1h-1zM479 378h1v1h-1zM479 371h1v1h-1zM480 372h1v1h-1zM481 377h1v1h-1zM482 372h1v1h-1zM483 378h1v1h-1zM484 373h1v1h-1zM485 378h1v1h-1zM486 372h1v1h-1zM486 383h1v1h-1zM488 379h1v1h-1zM488 379h1v1h-1zM489 369h1v1h-1zM490 377h1v1h-1zM490 379h1v1h-1zM492 377h1v1h-1zM492 383h1v1h-1zM493 378h1v1h-1zM494 373h1v1h-1zM495 377h1v1h-1zM495 382h1v1h-1zM496 384h1v1h-1zM497 383h1v1h-1zM498 385h1v1h-1zM499 385h1v1h-1zM500 379h1v1h-1zM501 380h1v1h-1zM502 380h1v1h-1zM502 378h1v1h-1zM503 372h1v1h-1zM505 380h1v1h-1zM505 376h1v1h-1zM506 375h1v1h-1zM507 381h1v1h-1zM507 378h1v1h-1zM508 377h1v1h-1zM509 380h1v1h-1zM510 384h1v1h-1zM512 378h1v1h-1zM512 372h1v1h-1zM513 378h1v1h-1zM514 381h1v1h-1zM515 368h1v1h-1zM516 380h1v1h-1zM516 371h1v1h-1zM517 375h1v1h-1zM518 381h1v1h-1zM519 378h1v1h-1zM519 381h1v1h-1zM520 380h1v1h-1zM522 377h1v1h-1zM523 368h1v1h-1zM523 371h1v1h-1zM524 373h1v1h-1zM525 369h1v1h-1zM525 381h1v1h-1zM526 380h1v1h-1zM527 375h1v1h-1zM529 385h1v1h-1zM529 369h1v1h-1zM530 376h1v1h-1zM531 377h1v1h-1zM531 386h1v1h-1zM533 377h1v1h-1zM533 382h1v1h-1zM534 375h1v1h-1zM535 371h1v1h-1zM536 381h1v1h-1zM537 377h1v1h-1zM538 382h1v1h-1zM539 376h1v1h-1zM539 375h1v1h-1zM540 369h1v1h-1zM541 371h1v1h-1zM542 380h1v1h-1zM543 381h1v1h-1zM543 385h1v1h-1zM545 375h1v1h-1zM546 368h1v1h-1zM546 371h1v1h-1zM547 387h1v1h-1zM548 368h1v1h-1zM548 387h1v1h-1zM550 378h1v1h-1zM550 377h1v1h-1zM552 383h1v1h-1zM552 372h1v1h-1zM553 386h1v1h-1zM554 372h1v1h-1zM555 376h1v1h-1zM556 376h1v1h-1zM556 375h1v1h-1zM557 373h1v1h-1zM558 382h1v1h-1zM559 372h1v1h-1zM560 373h1v1h-1zM561 371h1v1h-1zM562 369h1v1h-1zM562 378h1v1h-1zM563 370h1v1h-1zM564 382h1v1h-1zM565 374h1v1h-1zM566 375h1v1h-1zM566 368h1v1h-1zM568 379h1v1h-1zM568 380h1v1h-1zM570 383h1v1h-1zM570 376h1v1h-1zM571 381h1v1h-1zM572 379h1v1h-1zM572 380h1v1h-1zM574 383h1v1h-1zM575 379h1v1h-1zM576 377h1v1h-1zM576 371h1v1h-1zM577 371h1v1h-1zM578 375h1v1h-1zM578 378h1v1h-1zM580 380h1v1h-1zM580 373h1v1h-1zM581 381h1v1h-1zM582 382h1v1h-1zM583 376h1v1h-1zM584 377h1v1h-1zM584 374h1v1h-1zM585 380h1v1h-1zM586 374h1v1h-1zM587 372h1v1h-1zM588 367h1v1h-1zM589 373h1v1h-1zM589 372h1v1h-1zM591 378h1v1h-1zM592 375h1v1h-1zM593 374h1v1h-1zM593 369h1v1h-1zM594 379h1v1h-1zM595 384h1v1h-1zM596 371h1v1h-1zM596 377h1v1h-1zM597 380h1v1h-1zM598 378h1v1h-1zM599 368h1v1h-1zM600 379h1v1h-1zM601 375h1v1h-1zM602 381h1v1h-1zM603 380h1v1h-1zM604 372h1v1h-1zM604 372h1v1h-1zM605 381h1v1h-1zM606 376h1v1h-1zM607 374h1v1h-1zM608 376h1v1h-1zM609 375h1v1h-1zM610 365h1v1h-1zM610 370h1v1h-1zM611 379h1v1h-1zM612 377h1v1h-1zM613 371h1v1h-1zM613 379h1v1h-1zM615 379h1v1h-1zM615 380h1v1h-1zM616 378h1v1h-1zM617 382h1v1h-1zM618 368h1v1h-1zM619 373h1v1h-1zM619 378h1v1h-1zM620 378h1v1h-1zM621 375h1v1h-1zM622 378h1v1h-1zM623 375h1v1h-1zM624 383h1v1h-1zM625 374h1v1h-1zM626 367h1v1h-1zM626 381h1v1h-1zM627 375h1v1h-1zM628 371h1v1h-1zM629 375h1v1h-1zM630 370h1v1h-1zM631 372h1v1h-1zM631 380h1v1h-1zM632 382h1v1h-1zM634 373h1v1h-1zM634 377h1v1h-1zM635 376h1v1h-1zM636 381h1v1h-1zM637 369h1v1h-1zM638 376h1v1h-1zM639 379h1v1h-1zM639 377h1v1h-1zM640 379h1v1h-1zM641 378h1v1h-1zM642 376h1v1h-1zM642 374h1v1h-1zM643 368h1v1h-1zM645 376h1v1h-1zM645 375h1v1h-1zM646 372h1v1h-1zM647 382h1v1h-1zM648 376h1v1h-1zM649 378h1v1h-1zM649 380h1v1h-1zM650 376h1v1h-1zM652 375h1v1h-1zM652 368h1v1h-1zM653 380h1v1h-1zM654 376h1v1h-1zM655 376h1v1h-1zM656 379h1v1h-1zM657 374h1v1h-1zM657 379h1v1h-1zM659 379h1v1h-1zM659 374h1v1h-1zM660 372h1v1h-1zM661 364h1v1h-1zM662 374h1v1h-1zM662 378h1v1h-1zM663 377h1v1h-1zM665 371h1v1h-1zM665 384h1v1h-1zM666 377h1v1h-1zM666 376h1v1h-1zM668 374h1v1h-1zM668 375h1v1h-1zM669 369h1v1h-1zM670 367h1v1h-1zM671 381h1v1h-1zM672 377h1v1h-1zM673 379h1v1h-1zM673 373h1v1h-1zM674 372h1v1h-1zM676 371h1v1h-1zM676 372h1v1h-1zM677 373h1v1h-1zM678 371h1v1h-1zM679 363h1v1h-1zM679 377h1v1h-1zM680 370h1v1h-1zM681 377h1v1h-1zM682 378h1v1h-1zM683 381h1v1h-1zM684 370h1v1h-1zM685 370h1v1h-1zM686 382h1v1h-1zM686 373h1v1h-1zM687 380h1v1h-1zM688 378h1v1h-1zM689 372h1v1h-1zM689 371h1v1h-1zM690 366h1v1h-1zM691 384h1v1h-1zM693 377h1v1h-1zM693 372h1v1h-1zM694 370h1v1h-1zM695 375h1v1h-1zM696 373h1v1h-1zM697 370h1v1h-1zM697 374h1v1h-1zM698 368h1v1h-1zM699 368h1v1h-1zM700 363h1v1h-1zM701 378h1v1h-1zM702 363h1v1h-1zM703 367h1v1h-1zM704 364h1v1h-1zM704 377h1v1h-1zM706 370h1v1h-1zM706 364h1v1h-1zM707 370h1v1h-1zM707 372h1v1h-1zM708 367h1v1h-1zM709 369h1v1h-1zM710 369h1v1h-1zM711 377h1v1h-1zM712 373h1v1h-1zM713 366h1v1h-1zM714 373h1v1h-1zM715 375h1v1h-1zM715 370h1v1h-1zM716 365h1v1h-1zM717 376h1v1h-1zM718 372h1v1h-1zM719 376h1v1h-1zM720 370h1v1h-1zM721 367h1v1h-1zM722 368h1v1h-1zM722 379h1v1h-1zM723 371h1v1h-1zM724 365h1v1h-1zM725 364h1v1h-1zM725 371h1v1h-1zM727 377h1v1h-1zM727 367h1v1h-1zM728 372h1v1h-1zM729 362h1v1h-1zM730 377h1v1h-1zM731 369h1v1h-1zM732 365h1v1h-1zM733 379h1v1h-1zM733 375h1v1h-1zM734 376h1v1h-1zM735 359h1v1h-1zM736 374h1v1h-1zM737 372h1v1h-1zM738 377h1v1h-1zM738 370h1v1h-1zM740 369h1v1h-1zM740 374h1v1h-1zM742 369h1v1h-1zM742 375h1v1h-1zM742 371h1v1h-1zM743 368h1v1h-1zM745 374h1v1h-1zM746 362h1v1h-1zM746 377h1v1h-1zM747 374h1v1h-1zM748 373h1v1h-1zM749 369h1v1h-1zM749 374h1v1h-1zM751 370h1v1h-1zM751 378h1v1h-1zM753 362h1v1h-1zM753 370h1v1h-1zM754 362h1v1h-1zM755 374h1v1h-1zM755 371h1v1h-1zM757 360h1v1h-1zM758 357h1v1h-1zM758 369h1v1h-1zM759 364h1v1h-1zM760 373h1v1h-1zM761 368h1v1h-1zM762 365h1v1h-1zM763 371h1v1h-1zM763 372h1v1h-1zM764 356h1v1h-1zM765 367h1v1h-1zM766 366h1v1h-1zM766 366h1v1h-1zM768 371h1v1h-1zM769 355h1v1h-1zM770 364h1v1h-1zM770 358h1v1h-1zM771 359h1v1h-1zM772 356h1v1h-1zM772 369h1v1h-1zM773 364h1v1h-1z"/>
<path fill="#00e8ff" d="M245 391h1v1h-1zM245 400h1v1h-1zM246 380h1v1h-1zM247 389h1v1h-1zM247 389h1v1h-1zM248 376h1v1h-1zM249 387h1v1h-1zM250 394h1v1h-1zM251 395h1v1h-1zM252 377h1v1h-1zM252 402h1v1h-1zM253 384h1v1h-1zM253 374h1v1h-1zM254 385h1v1h-1zM256 383h1v1h-1zM256 382h1v1h-1zM257 399h1v1h-1zM258 394h1v1h-1zM258 390h1v1h-1zM259 390h1v1h-1zM260 390h1v1h-1zM261 386h1v1h-1zM262 392h1v1h-1zM263 385h1v1h-1zM263 389h1v1h-1zM264 388h1v1h-1zM265 389h1v1h-1zM265 390h1v1h-1zM266 400h1v1h-1zM267 398h1v1h-1zM268 381h1v1h-1zM268 389h1v1h-1zM270 385h1v1h-1zM270 387h1v1h-1zM271 396h1v1h-1zM272 383h1v1h-1zM272 374h1v1h-1zM273 386h1v1h-1zM274 394h1v1h-1zM274 397h1v1h-1zM276 399h1v1h-1zM276 384h1v1h-1zM277 385h1v1h-1zM278 381h1v1h-1zM279 389h1v1h-1zM280 384h1v1h-1zM280 381h1v1h-1zM281 397h1v1h-1zM282 384h1v1h-1zM283 390h1v1h-1zM284 385h1v1h-1zM284 383h1v1h-1zM285 395h1v1h-1zM286 374h1v1h-1zM286 388h1v1h-1zM287 377h1v1h-1zM288 390h1v1h-1zM289 394h1v1h-1zM289 391h1v1h-1zM290 390h1v1h-1zM291 398h1v1h-1zM292 386h1v1h-1zM293 385h1v1h-1zM294 389h1v1h-1zM294 388h1v1h-1zM295 385h1v1h-1zM295 383h1v1h-1zM297 392h1v1h-1zM298 397h1v1h-1zM298 384h1v1h-1zM299 387h1v1h-1zM300 383h1v1h-1zM300 390h1v1h-1zM301 389h1v1h-1zM302 384h1v1h-1zM303 391h1v1h-1zM304 387h1v1h-1zM305 387h1v1h-1zM305 391h1v1h-1zM306 375h1v1h-1zM307 392h1v1h-1zM307 380h1v1h-1zM308 385h1v1h-1zM309 387h1v1h-1zM310 389h1v1h-1zM310 383h1v1h-1zM311 381h1v1h-1zM312 386h1v1h-1zM313 401h1v1h-1zM314 382h1v1h-1zM314 395h1v1h-1zM316 389h1v1h-1zM316 389h1v1h-1zM317 375h1v1h-1zM318 386h1v1h-1zM318 385h1v1h-1zM319 396h1v1h-1zM320 392h1v1h-1zM321 391h1v1h-1zM322 391h1v1h-1zM322 391h1v1h-1zM323 397h1v1h-1zM324 385h1v1h-1zM325 392h1v1h-1zM326 388h1v1h-1zM326 393h1v1h-1zM327 389h1v1h-1zM328 403h1v1h-1zM329 391h1v1h-1zM330 387h1v1h-1zM331 390h1v1h-1zM331 383h1v1h-1zM332 386h1v1h-1zM332 394h1v1h-1zM334 388h1v1h-1zM334 393h1v1h-1zM335 388h1v1h-1zM335 395h1v1h-1zM336 386h1v1h-1zM337 387h1v1h-1zM338 385h1v1h-1zM339 396h1v1h-1zM340 390h1v1h-1zM340 377h1v1h-1zM341 390h1v1h-1zM342 386h1v1h-1zM343 381h1v1h-1zM343 391h1v1h-1zM345 391h1v1h-1zM345 388h1v1h-1zM345 392h1v1h-1zM346 394h1v1h-1zM347 384h1v1h-1zM348 380h1v1h-1zM348 396h1v1h-1zM350 389h1v1h-1zM350 396h1v1h-1zM351 384h1v1h-1zM352 392h1v1h-1zM353 395h1v1h-1zM354 392h1v1h-1zM354 389h1v1h-1zM355 400h1v1h-1zM356 386h1v1h-1zM357 391h1v1h-1zM357 391h1v1h-1zM358 391h1v1h-1zM359 380h1v1h-1zM360 394h1v1h-1zM360 381h1v1h-1zM361 379h1v1h-1zM362 385h1v1h-1zM363 388h1v1h-1zM364 389h1v1h-1zM365 389h1v1h-1zM365 402h1v1h-1zM366 395h1v1h-1zM367 395h1v1h-1zM368 387h1v1h-1zM368 388h1v1h-1zM369 395h1v1h-1zM370 387h1v1h-1zM371 378h1v1h-1zM371 389h1v1h-1zM372 393h1v1h-1zM373 387h1v1h-1zM374 387h1v1h-1zM375 401h1v1h-1zM375 389h1v1h-1zM376 388h1v1h-1zM377 385h1v1h-1zM377 387h1v1h-1zM379 393h1v1h-1zM379 394h1v1h-1zM380 379h1v1h-1zM381 389h1v1h-1zM381 390h1v1h-1zM382 393h1v1h-1zM383 386h1v1h-1zM384 393h1v1h-1zM385 387h1v1h-1zM386 389h1v1h-1zM387 389h1v1h-1zM387 394h1v1h-1zM388 386h1v1h-1zM388 387h1v1h-1zM389 393h1v1h-1zM390 397h1v1h-1zM391 374h1v1h-1zM392 380h1v1h-1zM392 390h1v1h-1zM393 391h1v1h-1zM394 385h1v1h-1zM395 376h1v1h-1zM395 385h1v1h-1zM396 388h1v1h-1zM398 385h1v1h-1zM398 389h1v1h-1zM399 402h1v1h-1zM400 381h1v1h-1zM400 389h1v1h-1zM401 391h1v1h-1zM401 386h1v1h-1zM402 384h1v1h-1zM403 383h1v1h-1zM404 389h1v1h-1zM405 388h1v1h-1zM406 383h1v1h-1zM407 396h1v1h-1zM407 385h1v1h-1zM408 393h1v1h-1zM409 380h1v1h-1zM410 380h1v1h-1zM410 393h1v1h-1zM411 380h1v1h-1zM412 381h1v1h-1zM412 394h1v1h-1zM414 386h1v1h-1zM414 392h1v1h-1zM415 384h1v1h-1zM416 388h1v1h-1zM417 384h1v1h-1zM417 387h1v1h-1zM418 388h1v1h-1zM419 381h1v1h-1zM420 394h1v1h-1zM420 393h1v1h-1zM422 378h1v1h-1zM422 384h1v1h-1zM423 389h1v1h-1zM423 387h1v1h-1zM425 394h1v1h-1zM425 390h1v1h-1zM426 391h1v1h-1zM427 390h1v1h-1zM428 382h1v1h-1zM428 390h1v1h-1zM429 390h1v1h-1zM430 384h1v1h-1zM431 390h1v1h-1zM432 385h1v1h-1zM432 395h1v1h-1zM433 395h1v1h-1zM434 402h1v1h-1zM435 394h1v1h-1zM436 393h1v1h-1zM436 394h1v1h-1zM437 396h1v1h-1zM438 382h1v1h-1zM439 386h1v1h-1zM439 397h1v1h-1zM440 395h1v1h-1zM441 384h1v1h-1zM442 387h1v1h-1zM442 394h1v1h-1zM443 378h1v1h-1zM444 388h1v1h-1zM445 388h1v1h-1zM445 386h1v1h-1zM446 387h1v1h-1zM447 392h1v1h-1zM448 391h1v1h-1zM449 392h1v1h-1zM449 400h1v1h-1zM450 387h1v1h-1zM451 388h1v1h-1zM452 386h1v1h-1zM452 380h1v1h-1zM454 385h1v1h-1zM454 392h1v1h-1zM455 392h1v1h-1zM456 396h1v1h-1zM457 385h1v1h-1zM457 391h1v1h-1zM458 382h1v1h-1zM459 394h1v1h-1zM460 388h1v1h-1zM461 374h1v1h-1zM461 394h1v1h-1zM462 381h1v1h-1zM463 385h1v1h-1zM464 375h1v1h-1zM464 394h1v1h-1zM465 388h1v1h-1zM465 384h1v1h-1zM467 384h1v1h-1zM468 388h1v1h-1zM468 376h1v1h-1zM469 403h1v1h-1zM469 387h1v1h-1zM470 388h1v1h-1zM472 385h1v1h-1zM472 376h1v1h-1zM473 381h1v1h-1zM473 389h1v1h-1zM475 392h1v1h-1zM475 388h1v1h-1zM476 387h1v1h-1zM477 384h1v1h-1zM477 383h1v1h-1zM479 386h1v1h-1zM479 382h1v1h-1zM479 386h1v1h-1zM480 385h1v1h-1zM481 385h1v1h-1zM482 397h1v1h-1zM483 385h1v1h-1zM483 396h1v1h-1zM485 396h1v1h-1zM485 381h1v1h-1zM486 391h1v1h-1zM486 377h1v1h-1zM488 394h1v1h-1zM488 394h1v1h-1zM489 400h1v1h-1zM490 396h1v1h-1zM491 381h1v1h-1zM491 399h1v1h-1zM492 393h1v1h-1zM493 376h1v1h-1zM494 393h1v1h-1zM495 381h1v1h-1zM496 384h1v1h-1zM496 384h1v1h-1zM497 388h1v1h-1zM498 394h1v1h-1zM499 403h1v1h-1zM499 389h1v1h-1zM500 387h1v1h-1zM500 393h1v1h-1zM502 399h1v1h-1zM502 376h1v1h-1zM503 397h1v1h-1zM504 399h1v1h-1zM505 379h1v1h-1zM505 390h1v1h-1zM507 386h1v1h-1zM507 388h1v1h-1zM508 385h1v1h-1zM508 388h1v1h-1zM510 391h1v1h-1zM510 401h1v1h-1zM511 393h1v1h-1zM512 390h1v1h-1zM513 391h1v1h-1zM513 397h1v1h-1zM514 391h1v1h-1zM515 400h1v1h-1zM515 391h1v1h-1zM516 383h1v1h-1zM517 386h1v1h-1zM518 382h1v1h-1zM519 385h1v1h-1zM519 388h1v1h-1zM520 381h1v1h-1zM521 390h1v1h-1zM522 383h1v1h-1zM523 389h1v1h-1zM523 385h1v1h-1zM524 390h1v1h-1zM525 379h1v1h-1zM525 382h1v1h-1zM526 384h1v1h-1zM527 397h1v1h-1zM528 384h1v1h-1zM529 384h1v1h-1zM530 397h1v1h-1zM530 395h1v1h-1zM531 403h1v1h-1zM532 392h1v1h-1zM533 389h1v1h-1zM534 399h1v1h-1zM534 382h1v1h-1zM535 383h1v1h-1zM536 393h1v1h-1zM537 392h1v1h-1zM537 393h1v1h-1zM538 393h1v1h-1zM539 378h1v1h-1zM540 394h1v1h-1zM541 390h1v1h-1zM542 383h1v1h-1zM542 401h1v1h-1zM543 391h1v1h-1zM543 386h1v1h-1zM545 398h1v1h-1zM545 387h1v1h-1zM546 384h1v1h-1zM547 403h1v1h-1zM547 382h1v1h-1zM548 384h1v1h-1zM550 391h1v1h-1zM550 380h1v1h-1zM550 390h1v1h-1zM552 393h1v1h-1zM552 384h1v1h-1zM553 403h1v1h-1zM554 385h1v1h-1zM555 378h1v1h-1zM555 401h1v1h-1zM556 384h1v1h-1zM557 384h1v1h-1zM557 385h1v1h-1zM558 386h1v1h-1zM559 380h1v1h-1zM560 384h1v1h-1zM561 389h1v1h-1zM561 390h1v1h-1zM562 374h1v1h-1zM563 391h1v1h-1zM564 386h1v1h-1zM564 386h1v1h-1zM565 387h1v1h-1zM566 393h1v1h-1zM567 391h1v1h-1zM568 385h1v1h-1zM568 392h1v1h-1zM569 385h1v1h-1zM570 391h1v1h-1zM571 373h1v1h-1zM572 393h1v1h-1zM572 382h1v1h-1zM573 388h1v1h-1zM574 380h1v1h-1zM575 386h1v1h-1zM576 374h1v1h-1zM576 399h1v1h-1zM577 375h1v1h-1zM578 384h1v1h-1zM578 394h1v1h-1zM579 398h1v1h-1zM580 403h1v1h-1zM581 382h1v1h-1zM582 382h1v1h-1zM582 385h1v1h-1zM584 388h1v1h-1zM584 391h1v1h-1zM585 387h1v1h-1zM586 399h1v1h-1zM586 389h1v1h-1zM587 400h1v1h-1zM588 393h1v1h-1zM589 378h1v1h-1zM590 391h1v1h-1zM591 378h1v1h-1zM592 387h1v1h-1zM592 385h1v1h-1zM593 392h1v1h-1zM594 382h1v1h-1zM595 389h1v1h-1zM595 372h1v1h-1zM596 373h1v1h-1zM597 383h1v1h-1zM597 384h1v1h-1zM598 384h1v1h-1zM599 391h1v1h-1zM599 387h1v1h-1zM600 388h1v1h-1zM601 398h1v1h-1zM602 385h1v1h-1zM603 390h1v1h-1zM604 386h1v1h-1zM605 380h1v1h-1zM605 377h1v1h-1zM606 402h1v1h-1zM607 390h1v1h-1zM607 385h1v1h-1zM608 389h1v1h-1zM610 383h1v1h-1zM610 386h1v1h-1zM611 378h1v1h-1zM612 386h1v1h-1zM613 380h1v1h-1zM613 387h1v1h-1zM614 375h1v1h-1zM615 386h1v1h-1zM616 394h1v1h-1zM616 384h1v1h-1zM617 398h1v1h-1zM618 394h1v1h-1zM619 390h1v1h-1zM620 396h1v1h-1zM620 395h1v1h-1zM620 388h1v1h-1zM621 397h1v1h-1zM623 400h1v1h-1zM623 394h1v1h-1zM624 383h1v1h-1zM625 384h1v1h-1zM625 385h1v1h-1zM627 383h1v1h-1zM627 380h1v1h-1zM628 382h1v1h-1zM629 382h1v1h-1zM629 385h1v1h-1zM630 389h1v1h-1zM631 395h1v1h-1zM632 384h1v1h-1zM633 399h1v1h-1zM634 386h1v1h-1zM634 403h1v1h-1zM635 374h1v1h-1zM635 387h1v1h-1zM637 393h1v1h-1zM638 381h1v1h-1zM638 385h1v1h-1zM639 387h1v1h-1zM640 378h1v1h-1zM640 374h1v1h-1zM641 389h1v1h-1zM642 397h1v1h-1zM642 399h1v1h-1zM644 386h1v1h-1zM644 382h1v1h-1zM645 386h1v1h-1zM645 388h1v1h-1zM646 393h1v1h-1zM647 385h1v1h-1zM648 391h1v1h-1zM649 390h1v1h-1zM650 387h1v1h-1zM650 381h1v1h-1zM652 390h1v1h-1zM652 385h1v1h-1zM653 372h1v1h-1zM654 382h1v1h-1zM654 387h1v1h-1zM655 388h1v1h-1zM656 375h1v1h-1zM657 390h1v1h-1zM657 396h1v1h-1zM659 385h1v1h-1zM659 389h1v1h-1zM660 382h1v1h-1zM661 393h1v1h-1zM661 395h1v1h-1zM662 378h1v1h-1zM663 383h1v1h-1zM663 388h1v1h-1zM665 389h1v1h-1zM666 388h1v1h-1zM666 378h1v1h-1zM667 403h1v1h-1zM668 392h1v1h-1zM669 390h1v1h-1zM669 379h1v1h-1zM670 394h1v1h-1zM670 384h1v1h-1zM672 381h1v1h-1zM672 389h1v1h-1zM673 389h1v1h-1zM674 383h1v1h-1zM675 382h1v1h-1zM675 397h1v1h-1zM676 390h1v1h-1zM677 378h1v1h-1zM678 386h1v1h-1zM679 384h1v1h-1zM679 389h1v1h-1zM680 372h1v1h-1zM681 387h1v1h-1zM682 387h1v1h-1zM682 390h1v1h-1zM683 396h1v1h-1zM684 388h1v1h-1zM684 398h1v1h-1zM685 386h1v1h-1zM686 388h1v1h-1zM687 384h1v1h-1zM688 384h1v1h-1zM689 385h1v1h-1zM689 392h1v1h-1zM690 388h1v1h-1zM691 381h1v1h-1zM692 380h1v1h-1zM692 384h1v1h-1zM693 384h1v1h-1zM694 396h1v1h-1zM695 385h1v1h-1zM695 379h1v1h-1zM696 386h1v1h-1zM697 400h1v1h-1zM698 387h1v1h-1zM699 382h1v1h-1zM699 390h1v1h-1zM700 385h1v1h-1zM701 389h1v1h-1zM702 389h1v1h-1zM703 388h1v1h-1zM704 385h1v1h-1zM704 392h1v1h-1zM705 391h1v1h-1zM706 393h1v1h-1zM706 390h1v1h-1zM707 387h1v1h-1zM708 390h1v1h-1zM709 386h1v1h-1zM710 399h1v1h-1zM711 392h1v1h-1zM711 384h1v1h-1zM712 376h1v1h-1zM712 385h1v1h-1zM713 391h1v1h-1zM715 387h1v1h-1zM715 373h1v1h-1zM716 391h1v1h-1zM716 377h1v1h-1zM717 393h1v1h-1zM718 382h1v1h-1zM719 381h1v1h-1zM720 381h1v1h-1zM720 385h1v1h-1zM722 381h1v1h-1zM722 397h1v1h-1zM723 381h1v1h-1zM724 402h1v1h-1zM724 398h1v1h-1zM725 381h1v1h-1zM726 386h1v1h-1zM727 389h1v1h-1zM728 379h1v1h-1zM728 391h1v1h-1zM729 385h1v1h-1zM730 401h1v1h-1zM731 383h1v1h-1zM732 384h1v1h-1zM732 391h1v1h-1zM733 388h1v1h-1zM734 385h1v1h-1zM734 376h1v1h-1zM736 377h1v1h-1zM736 392h1v1h-1zM737 393h1v1h-1zM738 400h1v1h-1zM738 400h1v1h-1zM740 389h1v1h-1zM740 387h1v1h-1zM741 388h1v1h-1zM741 387h1v1h-1zM743 385h1v1h-1zM744 372h1v1h-1zM744 394h1v1h-1zM745 387h1v1h-1zM745 387h1v1h-1zM746 383h1v1h-1zM747 385h1v1h-1zM748 388h1v1h-1zM749 372h1v1h-1zM749 390h1v1h-1zM750 374h1v1h-1zM751 391h1v1h-1zM752 385h1v1h-1zM752 387h1v1h-1zM754 387h1v1h-1zM754 385h1v1h-1zM755 390h1v1h-1zM755 381h1v1h-1zM756 387h1v1h-1zM757 385h1v1h-1zM758 400h1v1h-1zM759 385h1v1h-1zM760 381h1v1h-1zM760 385h1v1h-1zM761 385h1v1h-1zM762 386h1v1h-1zM763 381h1v1h-1zM763 391h1v1h-1zM764 381h1v1h-1zM765 384h1v1h-1zM766 389h1v1h-1zM766 373h1v1h-1zM767 382h1v1h-1zM768 379h1v1h-1zM769 390h1v1h-1zM769 402h1v1h-1zM770 378h1v1h-1zM771 378h1v1h-1zM772 384h1v1h-1zM773 377h1v1h-1zM774 388h1v1h-1z"/>
<path fill="#ffff00" d="M278 271h1v1h-1zM318 365h1v1h-1zM423 357h1v1h-1zM459 352h1v1h-1zM516 363h1v1h-1zM629 296h1v1h-1zM544 365h1v1h-1zM673 351h1v1h-1z"/>
<path fill="#0a7cff" d="M302 224h1v1h-1zM337 337h1v1h-1zM315 344h1v1h-1zM363 360h1v1h-1zM489 354h1v1h-1zM667 264h1v1h-1zM662 282h1v1h-1zM407 364h1v1h-1zM415 370h1v1h-1zM458 370h1v1h-1zM485 370h1v1h-1zM627 345h1v1h-1zM671 333h1v1h-1zM693 345h1v1h-1zM769 273h1v1h-1zM775 312h1v1h-1zM649 351h1v1h-1z"/>
<path fill="#ff0000" d="M317 357h1v1h-1zM316 359h1v1h-1zM401 362h1v1h-1zM603 357h1v1h-1zM577 364h1v1h-1zM738 347h1v1h-1z"/>
<path fill="#00e8ff" d="M278 358h1v1h-1zM334 357h1v1h-1zM386 348h1v1h-1zM421 357h1v1h-1zM478 345h1v1h-1zM573 307h1v1h-1zM624 330h1v1h-1zM543 352h1v1h-1zM675 174h1v1h-1zM742 324h1v1h-1zM737 354h1v1h-1zM551 364h1v1h-1z"/>
<path fill="#00ff00" d="M486 372h1v1h-1zM466 371h1v1h-1zM585 343h1v1h-1zM698 355h1v1h-1z"/></g>
    <g font-family="'Liberation Sans',sans-serif" font-size="10.7" fill="#00001c" shape-rendering="auto"><text x="239" y="392.0" text-anchor="end">20</text><text x="239" y="366.0" text-anchor="end">40</text><text x="239" y="340.0" text-anchor="end">60</text><text x="239" y="314.0" text-anchor="end">80</text><text x="239" y="288.0" text-anchor="end">100</text><text x="239" y="262.0" text-anchor="end">120</text><text x="239" y="236.0" text-anchor="end">140</text><text x="239" y="210.0" text-anchor="end">160</text><text x="239" y="184.0" text-anchor="end">180</text><text x="239" y="158.0" text-anchor="end">200</text><text x="244.5" y="426" text-anchor="middle">0</text><text x="297.5" y="426" text-anchor="middle">10</text><text x="350.5" y="426" text-anchor="middle">20</text><text x="403.5" y="426" text-anchor="middle">30</text><text x="456.5" y="426" text-anchor="middle">40</text><text x="509.5" y="426" text-anchor="middle">50</text><text x="562.5" y="426" text-anchor="middle">60</text><text x="615.5" y="426" text-anchor="middle">70</text><text x="668.5" y="426" text-anchor="middle">80</text><text x="721.5" y="426" text-anchor="middle">90</text><text x="765.5" y="426">100%</text><text x="242.300" y="145.300">ms</text></g>
  </svg>
  <div class="lbl" style="left:256px;top:432px;">transfer size</div>
  <div class="lbl" style="left:367px;top:432px;">operation / sec</div>
  <div class="lbl" style="left:475px;top:432px;">avg. access time</div>
  <div class="lbl" style="left:620px;top:432px;">avg. speed</div>

  <!-- table -->
  <div class="abs" style="left:245px;top:466px;width:480px;height:2px;background:#5e5e5e;"></div>
  <div class="abs" style="left:356px;top:467px;width:2px;height:89px;background:#5e5e5e;"></div>
  <div class="abs" style="left:470px;top:467px;width:2px;height:89px;background:#5e5e5e;"></div>
  <div class="abs" style="left:587px;top:467px;width:2px;height:89px;background:#5e5e5e;"></div>
  <div class="sq" style="top:472px;background:#ffff00;"></div>
  <div class="cb" style="top:470px;"></div>
  <svg width="864" height="639" viewBox="0 0 864 639"><path d="M247.5 476.7l3 3l5.5 -6.5" fill="none" stroke="#333" stroke-width="1.1"/></svg>
  <div class="lbl" style="left:262px;top:470.7px;">512 bytes</div>
  <div class="val" style="left:366px;width:101px;top:469.2px;">62 IOPS</div>
  <div class="val" style="left:480px;width:101px;top:469.2px;">16.1 ms</div>
  <div class="val" style="left:596px;width:121px;top:469.2px;">0.031 MB/sec</div>
  <div class="sq" style="top:489px;background:#ff0000;"></div>
  <div class="cb" style="top:487px;"></div>
  <svg width="864" height="639" viewBox="0 0 864 639"><path d="M247.5 493.7l3 3l5.5 -6.5" fill="none" stroke="#333" stroke-width="1.1"/></svg>
  <div class="lbl" style="left:262px;top:487.7px;">4 KB</div>
  <div class="val" style="left:366px;width:101px;top:486.2px;">66 IOPS</div>
  <div class="val" style="left:480px;width:101px;top:486.2px;">15.9 ms</div>
  <div class="val" style="left:596px;width:121px;top:486.2px;">0.260 MB/sec</div>
  <div class="sq" style="top:507px;background:#00e000;"></div>
  <div class="cb" style="top:504px;"></div>
  <svg width="864" height="639" viewBox="0 0 864 639"><path d="M247.5 510.7l3 3l5.5 -6.5" fill="none" stroke="#333" stroke-width="1.1"/></svg>
  <div class="lbl" style="left:262px;top:504.7px;">64 KB</div>
  <div class="val" style="left:366px;width:101px;top:503.2px;">62 IOPS</div>
  <div class="val" style="left:480px;width:101px;top:503.2px;">16.6 ms</div>
  <div class="val" style="left:596px;width:121px;top:503.2px;">3.906 MB/sec</div>
  <div class="sq" style="top:525px;background:#0a7cff;"></div>
  <div class="cb" style="top:521px;"></div>
  <svg width="864" height="639" viewBox="0 0 864 639"><path d="M247.5 527.7l3 3l5.5 -6.5" fill="none" stroke="#333" stroke-width="1.1"/></svg>
  <div class="lbl" style="left:262px;top:521.7px;">1 MB</div>
  <div class="val" style="left:366px;width:101px;top:520.2px;">38 IOPS</div>
  <div class="val" style="left:480px;width:101px;top:520.2px;">26.4 ms</div>
  <div class="val" style="left:596px;width:121px;top:520.2px;">38.462 MB/sec</div>
  <div class="sq" style="top:543px;background:#00e8ff;"></div>
  <div class="cb" style="top:538px;"></div>
  <svg width="864" height="639" viewBox="0 0 864 639"><path d="M247.5 544.7l3 3l5.5 -6.5" fill="none" stroke="#333" stroke-width="1.1"/></svg>
  <div class="lbl" style="left:262px;top:538.7px;">Random</div>
  <div class="val" style="left:366px;width:101px;top:537.2px;">47 IOPS</div>
  <div class="val" style="left:480px;width:101px;top:537.2px;">21.2 ms</div>
  <div class="val" style="left:596px;width:121px;top:537.2px;">21.089 MB/sec</div>
  <!-- radios -->
  <div class="abs" style="left:743px;top:500px;width:13px;height:13px;border:1px solid #333;border-radius:50%;background:#fff;"></div>
  <div class="abs" style="left:746px;top:503px;width:7px;height:7px;border-radius:50%;background:#222;"></div>
  <div class="abs" style="left:743px;top:520px;width:13px;height:13px;border:1px solid #333;border-radius:50%;background:#fff;"></div>
  <div class="lbl" style="left:760px;top:499.500px;font-size:13px;">Read</div>
  <div class="lbl" style="left:760px;top:519.500px;font-size:13.300px;">Write</div>

  <!-- bottom bar -->
  <div class="abs" style="left:197px;top:559px;width:660px;height:52px;background:linear-gradient(#fdfeff,#eef6fc 50%,#e0eef9);border-top:1px solid #b4bcc8;"></div>
  <div class="abs" style="left:719px;top:572px;width:117px;height:25px;border-radius:13px;background:linear-gradient(#2a6cc0 0,#0c58ac 30%,#064a9c 55%,#0a55a8 100%);border:1px solid #0a3f86;box-shadow:0 1px 2px rgba(0,0,0,.45),inset 0 1px 1px rgba(160,200,255,.7);color:#fff;font-weight:bold;font-size:14.500px;line-height:24.500px;text-align:center;padding-left:3px;">Start</div>

  <div class="status"></div>
  <div class="ver">ASO3 Version: 3.81.8181.233</div>
  <svg width="864" height="639" viewBox="0 0 864 639" font-family="'Liberation Sans',sans-serif" font-style="italic">
    <text x="774" y="631.6" font-size="16.5" fill="#3a3a3a" stroke="#e6e2d6" stroke-width=".9" textLength="25" lengthAdjust="spacingAndGlyphs">SYS</text>
    <g fill="#ece8dc" font-weight="bold" stroke="#ece8dc" stroke-width=".5">
    <text x="799.500" y="629.800" font-size="12.800" textLength="10.500" lengthAdjust="spacingAndGlyphs">T</text>
    <text x="808.5" y="631.8" font-size="22" textLength="32" lengthAdjust="spacingAndGlyphs">wea</text>
    <text x="840.200" y="631.600" font-size="14.600" textLength="12.500" lengthAdjust="spacingAndGlyphs">K</text>
    </g>
  </svg>
</div>
</body>
</html>
